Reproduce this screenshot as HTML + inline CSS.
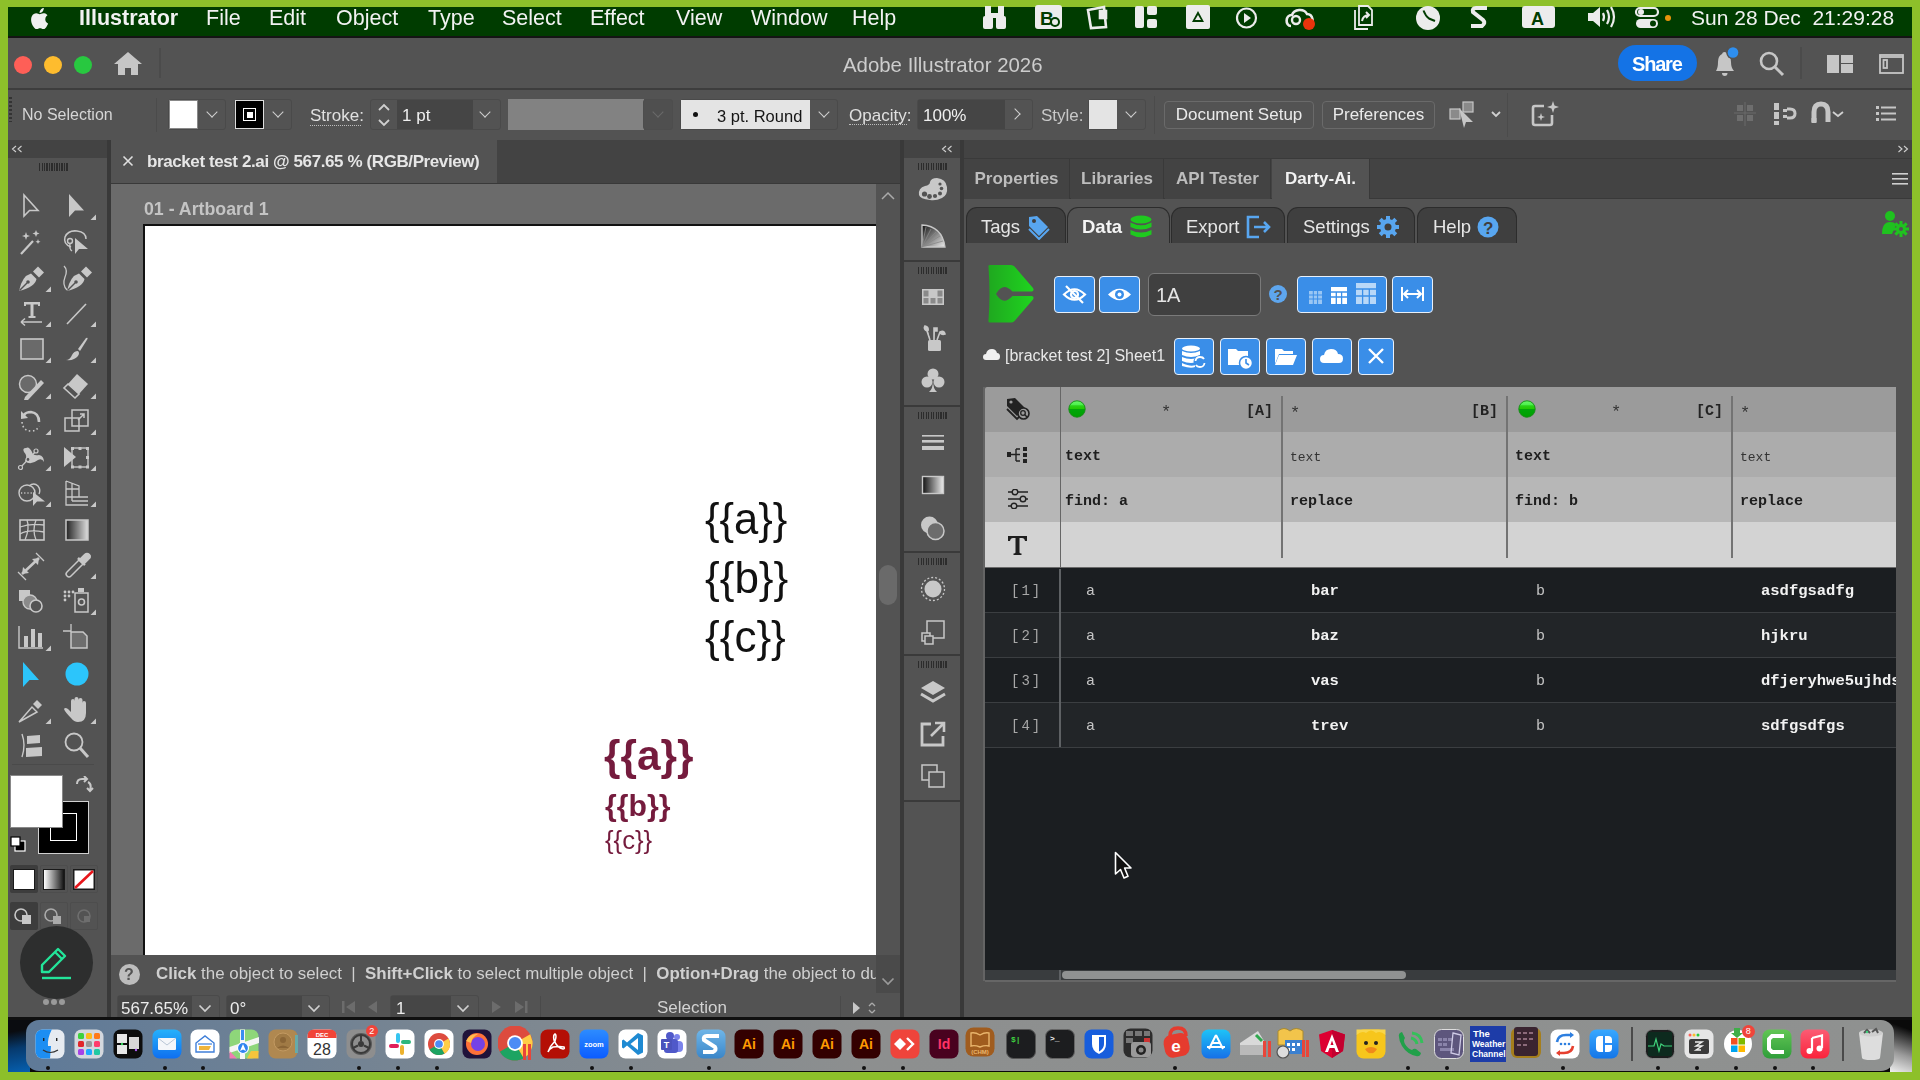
<!DOCTYPE html>
<html><head><meta charset="utf-8">
<style>
*{margin:0;padding:0;box-sizing:border-box}
html,body{width:1920px;height:1080px;overflow:hidden;background:#8dc02a;font-family:"Liberation Sans",sans-serif;-webkit-font-smoothing:antialiased}
.t{will-change:transform}
.a{position:absolute}
.t{position:absolute;white-space:nowrap;line-height:1}
#menubar{left:8px;top:7px;width:1904px;height:30px;background:#003c00}
#menubar .t{color:#f2f2f2;font-size:21.5px;top:1px}
#win{left:8px;top:37px;width:1904px;height:981px;background:#535353}
#wall{left:8px;top:1018px;width:1904px;height:54px;background:#0a0a0a}
#wallL{left:8px;top:1018px;width:22px;height:54px;background:linear-gradient(170deg,#0a0c10 0%,#0a0c10 25%,#063a6e 55%,#0660b0 100%)}
#wallR{left:1890px;top:1018px;width:22px;height:54px;background:linear-gradient(200deg,#0a0a0a 0%,#0a0a0a 20%,#9a9a9a 65%,#f0f0f0 100%)}
#wline{left:8px;top:1017px;width:1904px;height:3px;background:#101010}
#dock{left:26px;top:1020px;width:1868px;height:51px;border-radius:13px;background:linear-gradient(90deg,#5f7a98 0%,#7c8791 25%,#8d8f8f 45%,#8f9190 100%)}
.ico{position:absolute;top:1029px;width:30px;height:30px;border-radius:7px}
.dot{position:absolute;top:1066px;width:4px;height:4px;border-radius:2px;background:#111}

#mbline{left:8px;top:36px;width:1904px;height:2px;background:#141414}
#title{left:8px;top:38px;width:1904px;height:52px;background:#535353;border-bottom:2px solid #3d3d3d}
#ctrl{left:8px;top:90px;width:1904px;height:50px;background:#535353}
.lt{color:#d6d6d6}
.grp{position:absolute;border:1px solid #4a4a4a;border-radius:3px;background:#535353}
.chev{position:absolute;width:8px;height:8px;border-right:1.8px solid #d0d0d0;border-bottom:1.8px solid #d0d0d0;transform:rotate(45deg)}
.btn{position:absolute;border:1.5px solid #6a6a6a;border-radius:4px;color:#eaeaea;font-size:17px;text-align:center}

#content{left:8px;top:140px;width:1904px;height:878px;background:#393939}
.topbar{position:absolute;top:0;height:18px;background:#434343}
.grip{position:absolute;height:8px;background:repeating-linear-gradient(90deg,#2c2c2c 0 1.4px,transparent 1.4px 2.5px)}

.pg{position:absolute;left:896px;width:56px;background:#535353;border-bottom:2px solid #3a3a3a}
.pi{position:absolute;left:912px}
.ptab{position:absolute;top:19px;height:40px;background:#434343;border-right:1px solid #393939;color:#bdbdbd;font-size:17px;font-weight:bold}
.ptab span{position:absolute;top:9.5px;left:0;width:100%;text-align:center}
.dtab{position:absolute;top:67px;height:36px;background:#3f3f3f;border:1.5px solid #2c2c2c;border-bottom:none;border-radius:11px 11px 0 0;color:#e6e6e6;font-size:18.5px}
.bb{position:absolute;background:#3a8ee8;border:1.5px solid #e8f0fa;border-radius:4px}

.mono{font-family:"Liberation Mono",monospace}
.hrow{position:absolute;left:977px;width:911px;height:45px}
.brow{position:absolute;left:977px;width:911px;height:45px;border-bottom:1px solid #3b3e41}
.cs{position:absolute;width:1.5px;background:#737373}
</style></head><body>
<div id="menubar" class="a">
<svg class="a" style="left:20px;top:-1px" width="25" height="25" viewBox="0 0 22 22"><path fill="#f0f0f0" d="M15.2 11.6c0-2.3 1.9-3.4 2-3.5-1.1-1.6-2.8-1.8-3.4-1.8-1.4-.1-2.8.9-3.5.9-.7 0-1.8-.8-3-.8-1.5 0-3 .9-3.8 2.3-1.6 2.8-.4 7 1.2 9.3.8 1.1 1.7 2.4 2.9 2.3 1.2 0 1.6-.7 3-.7s1.8.7 3 .7c1.3 0 2.1-1.1 2.8-2.3.9-1.3 1.3-2.6 1.3-2.6s-2.5-1-2.5-3.8zM12.9 4.8c.6-.8 1.1-1.9 1-3-.9 0-2.1.6-2.7 1.4-.6.7-1.1 1.8-1 2.9 1 .1 2.1-.5 2.7-1.3z"/></svg>
<svg class="a" style="left:0;top:-7px" width="1904" height="37" viewBox="0 0 1904 37" fill="#ececec">
<!-- binoculars -->
<g transform="translate(975,0)"><rect x="0" y="16" width="10" height="13" rx="2"/><rect x="13" y="16" width="10" height="13" rx="2"/><rect x="2" y="6" width="6" height="11"/><rect x="15" y="6" width="6" height="11"/><rect x="8" y="13" width="7" height="5"/></g>
<!-- B box -->
<g transform="translate(1027,0)"><rect x="0" y="5" width="27" height="24" rx="3"/><text x="5" y="25" font-family="Liberation Sans" font-weight="bold" font-size="19" fill="#003c00">B</text><circle cx="20" cy="22" r="5" fill="#003c00"/><circle cx="20" cy="22" r="3" fill="#ececec"/></g>
<!-- wallet -->
<g transform="translate(1078,0)" fill="none" stroke="#ececec" stroke-width="2.6"><path d="M2 10 L18 7 L20 27 L5 28 Z"/><rect x="14" y="11" width="6" height="7" fill="#ececec"/></g>
<!-- grid -->
<g transform="translate(1127,0)"><rect x="0" y="6" width="9" height="22" rx="2"/><rect x="12" y="6" width="10" height="9" rx="2"/><rect x="12" y="19" width="10" height="9" rx="2"/></g>
<!-- drive -->
<g transform="translate(1178,0)"><rect x="0" y="5" width="24" height="24" rx="2"/><path d="M12 11 L18 22 L6 22 Z" fill="#003c00"/><path d="M12 15 L15 20 L9 20 Z" fill="#ececec"/></g>
<!-- play -->
<g transform="translate(1228,0)"><circle cx="10.5" cy="18" r="9.5" fill="none" stroke="#ececec" stroke-width="2.2"/><path d="M8 13 L15 18 L8 23 Z"/></g>
<!-- CC -->
<g transform="translate(1277,0)"><path d="M6 26 C0 26 0 15 7 15 C9 9 19 8 22 14 C28 14 30 24 24 26" fill="none" stroke="#ececec" stroke-width="2.6"/><circle cx="11" cy="20" r="4" fill="none" stroke="#ececec" stroke-width="2.4"/><circle cx="24" cy="24" r="6" fill="#e8340c"/></g>
<!-- share doc -->
<g transform="translate(1343,0)" fill="none" stroke="#ececec" stroke-width="1.8"><path d="M4 10 V29 H17"/><path d="M8 6 H17 L21 10 V25 H8 Z"/><path d="M11 21 C12 16 15 15 18 15 M15 12 L18 15 L15 18" stroke-width="2"/></g>
<!-- clock -->
<g transform="translate(1408,0)"><circle cx="12" cy="18" r="12"/><path d="M7.5 10.5 Q9.5 16 13 18.5 L19 21" fill="none" stroke="#003c00" stroke-width="2"/></g>
<!-- S -->
<g transform="translate(1460,0)" fill="none" stroke="#ececec" stroke-width="4"><path d="M19 8 H8 Q4 8 5 12 L15 20 Q18 23 14 26 H3"/></g>
<!-- A box -->
<g transform="translate(1514,0)"><rect x="0" y="6" width="33" height="22" rx="3"/><text x="9" y="25" font-family="Liberation Sans" font-weight="bold" font-size="18" fill="#003c00">A</text></g>
<!-- volume -->
<g transform="translate(1578,0)"><path d="M2 13 H7 L14 7 V27 L7 21 H2 Z"/><g fill="none" stroke="#ececec" stroke-width="2.2"><path d="M17 13 Q19 17 17 21"/><path d="M21 10 Q25 17 21 24"/><path d="M25 7 Q31 17 25 27"/></g></g>
<!-- control center -->
<g transform="translate(1628,0)"><rect x="0" y="8" width="22" height="8" rx="4" fill="none" stroke="#ececec" stroke-width="2.2"/><circle cx="5" cy="12" r="3"/><rect x="0" y="19" width="22" height="9" rx="4.5"/><circle cx="17" cy="23.5" r="3" fill="#003c00"/><circle cx="32" cy="18" r="3" fill="#e8940c"/></g>
</svg>
<div class="t" style="left:70.5px;font-weight:bold">Illustrator</div>
<div class="t" style="left:198px">File</div>
<div class="t" style="left:260.5px">Edit</div>
<div class="t" style="left:328px">Object</div>
<div class="t" style="left:419.5px">Type</div>
<div class="t" style="left:494px">Select</div>
<div class="t" style="left:581.5px">Effect</div>
<div class="t" style="left:668px">View</div>
<div class="t" style="left:743px">Window</div>
<div class="t" style="left:843.5px">Help</div>
<div class="t" style="left:1683px;font-size:21px;top:-0.5px">Sun 28 Dec&nbsp; 21:29:28</div>
</div>
<div id="win" class="a"></div>
<div id="mbline" class="a"></div>
<div id="title" class="a">
<div class="a" style="left:5.5px;top:17.5px;width:18px;height:18px;border-radius:9px;background:#fe5f57"></div>
<div class="a" style="left:35.5px;top:17.5px;width:18px;height:18px;border-radius:9px;background:#febc2e"></div>
<div class="a" style="left:65.5px;top:17.5px;width:18px;height:18px;border-radius:9px;background:#28c840"></div>
<svg class="a" style="left:106px;top:14px" width="28" height="24" viewBox="0 0 28 24"><path fill="#c6c6c6" d="M14 0 L28 12 L24 12 L24 23 L17 23 L17 16 L11 16 L11 23 L4 23 L4 12 L0 12 Z"/></svg>
<div class="a" style="left:151px;top:10px;width:2px;height:30px;background:#4b4b4b"></div>
<div class="t" style="left:834.5px;top:16.5px;font-size:20.4px;color:#cdcdcd">Adobe Illustrator 2026</div>
<div class="a" style="left:1610px;top:7px;width:79px;height:36px;border-radius:18px;background:#1473e6"></div>
<div class="t" style="left:1624px;top:16px;font-size:20px;font-weight:bold;color:#fff;letter-spacing:-1.2px">Share</div>
<svg class="a" style="left:1692px;top:8px" width="40" height="32" viewBox="0 0 40 32"><path fill="#c6c6c6" d="M16 25 Q18 22 18 16 Q18 10 22 8 Q22.5 6 24.5 6 Q26.5 6 27 8 Q31 10 31 16 Q31 22 34 25 Z"/><path fill="#c6c6c6" d="M22 27 H27.5 Q27.5 30 24.75 30 Q22 30 22 27Z"/><circle cx="33" cy="6.5" r="6.8" fill="#535353"/><circle cx="33" cy="6.5" r="5.3" fill="#2e8ff0"/></svg>
<svg class="a" style="left:1750px;top:12px" width="28" height="28" viewBox="0 0 28 28"><circle cx="11" cy="11" r="8" fill="none" stroke="#c6c6c6" stroke-width="2.6"/><path d="M17 17 L25 25" stroke="#c6c6c6" stroke-width="3"/></svg>
<div class="a" style="left:1792px;top:9px;width:2px;height:32px;background:#4b4b4b"></div>
<svg class="a" style="left:1819px;top:15px" width="30" height="22" viewBox="0 0 30 22" fill="#c6c6c6"><rect x="0" y="2" width="12" height="18"/><rect x="14" y="2" width="12" height="8"/><rect x="14" y="11" width="12" height="9"/></svg>
<svg class="a" style="left:1871px;top:15px" width="26" height="22" viewBox="0 0 26 22" fill="none" stroke="#c6c6c6" stroke-width="1.8"><rect x="1" y="2" width="23" height="18"/><path d="M1 4 H24"/><rect x="4.5" y="7" width="3.5" height="8"/></svg>
</div>
<div id="ctrl" class="a">
<div class="a" style="left:1px;top:7px;width:3px;height:25px;background:repeating-linear-gradient(180deg,#333 0 2px,transparent 2px 4px)"></div>
<div class="t lt" style="left:14px;top:17px;font-size:16px">No Selection</div>
<div class="a" style="left:148px;top:8px;width:1px;height:34px;background:#4b4b4b"></div>
<div class="grp" style="left:160px;top:9px;width:58px;height:31px"></div>
<div class="a" style="left:161px;top:10px;width:29px;height:29px;background:#fff;border:1px solid #888"></div>
<div class="chev" style="left:200px;top:18px"></div>
<div class="grp" style="left:226px;top:9px;width:58px;height:31px"></div>
<div class="a" style="left:227px;top:10px;width:29px;height:29px;background:#000;border:1px solid #ddd"></div>
<div class="a" style="left:235px;top:18px;width:13px;height:13px;border:1.5px solid #fff"></div>
<div class="a" style="left:238.5px;top:21.5px;width:6px;height:6px;background:#fff"></div>
<div class="chev" style="left:266px;top:18px"></div>
<div class="t lt" style="left:302px;top:17px;font-size:17px;color:#e0e0e0">Stroke:</div>
<div class="a" style="left:302px;top:35px;width:51px;height:0;border-top:1.5px dotted #bdbdbd"></div>
<div class="grp" style="left:362px;top:9px;width:131px;height:31px"></div>
<div class="a" style="left:389px;top:10px;width:76px;height:29px;background:#454545"></div>
<svg class="a" style="left:367px;top:11px" width="18" height="28" viewBox="0 0 18 28" fill="none" stroke="#d0d0d0" stroke-width="1.8"><path d="M4 9 L9 4 L14 9"/><path d="M4 19 L9 24 L14 19"/></svg>
<div class="t" style="left:394px;top:17px;font-size:17px;color:#f0f0f0">1 pt</div>
<div class="chev" style="left:473px;top:18px"></div>
<div class="a" style="left:500px;top:9px;width:136px;height:31px;background:#828282"></div>
<div class="grp" style="left:635px;top:9px;width:30px;height:31px;background:#4f4f4f;border-color:#4d4d4d"></div>
<div class="chev" style="left:646px;top:18px;border-color:#6a6a6a"></div>
<div class="grp" style="left:672px;top:9px;width:158px;height:31px"></div>
<div class="a" style="left:673px;top:10px;width:129px;height:29px;background:#e4e4e4"></div>
<div class="a" style="left:685px;top:22px;width:5px;height:5px;border-radius:3px;background:#111"></div>
<div class="t" style="left:709px;top:17.5px;font-size:16.5px;color:#141414">3 pt. Round</div>
<div class="chev" style="left:812px;top:18px"></div>
<div class="t lt" style="left:841px;top:17px;font-size:17px;color:#e0e0e0">Opacity:</div>
<div class="a" style="left:841px;top:34px;width:58px;height:0;border-top:1.5px dotted #bdbdbd"></div>
<div class="grp" style="left:909px;top:9px;width:116px;height:31px"></div>
<div class="a" style="left:910px;top:10px;width:87px;height:29px;background:#454545"></div>
<div class="t" style="left:915px;top:17px;font-size:17px;color:#f0f0f0">100%</div>
<div class="a" style="left:1003px;top:20px;width:8px;height:8px;border-right:1.8px solid #d0d0d0;border-top:1.8px solid #d0d0d0;transform:rotate(45deg)"></div>
<div class="t" style="left:1033px;top:17px;font-size:17px;color:#c8c8c8">Style:</div>
<div class="grp" style="left:1080px;top:9px;width:58px;height:31px"></div>
<div class="a" style="left:1081px;top:10px;width:28px;height:29px;background:#e4e4e4"></div>
<div class="chev" style="left:1119px;top:18px"></div>
<div class="a" style="left:1146px;top:6px;width:1px;height:38px;background:#4b4b4b"></div>
<div class="btn" style="left:1156px;top:11px;width:150px;height:28px;line-height:25px">Document Setup</div>
<div class="btn" style="left:1314px;top:11px;width:113px;height:28px;line-height:25px">Preferences</div>
<svg class="a" style="left:1440px;top:10px" width="60" height="30" viewBox="0 0 60 30"><g fill="#8a8a8a" stroke="#c6c6c6" stroke-width="1.2"><rect x="2" y="9" width="10" height="10"/><rect x="15" y="2" width="10" height="10"/></g><path d="M11 8 L25 22 L18 22 L16 28 Z" fill="#c6c6c6"/><path d="M44 12 L48 16 L52 12" fill="none" stroke="#d0d0d0" stroke-width="1.8"/></svg>
<div class="a" style="left:1499px;top:3px;width:1px;height:44px;background:#4b4b4b"></div>
<svg class="a" style="left:1522px;top:10px" width="30" height="28" viewBox="0 0 30 28"><path d="M14 6 H5 Q3 6 3 8 V23 Q3 25 5 25 H20 Q22 25 22 23 V15" fill="none" stroke="#c6c6c6" stroke-width="2.6"/><path d="M23 1 L24.5 5.5 L29 7 L24.5 8.5 L23 13 L21.5 8.5 L17 7 L21.5 5.5Z M11 13 L12 16 L15 17 L12 18 L11 21 L10 18 L7 17 L10 16Z" fill="#c6c6c6"/></svg>
<svg class="a" style="left:1726px;top:11px" width="24" height="26" viewBox="0 0 24 26"><g fill="#6e6e6e"><rect x="3" y="4" width="6" height="6"/><rect x="13" y="4" width="6" height="6"/><rect x="3" y="14" width="6" height="6"/><rect x="13" y="14" width="6" height="6"/></g><path d="M11 1 V25 M0 12 H22" stroke="#6a6a6a" stroke-width="1"/></svg>
<svg class="a" style="left:1766px;top:11px" width="24" height="26" viewBox="0 0 24 26" fill="#c6c6c6"><rect x="0" y="2" width="5" height="7"/><rect x="0" y="11" width="5" height="7"/><rect x="0" y="20" width="5" height="4"/><rect x="9" y="8" width="4" height="3"/><rect x="9" y="14" width="4" height="3"/><path d="M13 8 H16 Q21 8 21 12.5 Q21 17 16 17 H13" fill="none" stroke="#c6c6c6" stroke-width="3"/></svg>
<svg class="a" style="left:1803px;top:11px" width="42" height="26" viewBox="0 0 42 26"><path d="M3 21 V11 Q3 3 10 3 Q17 3 17 11 V21" fill="none" stroke="#c6c6c6" stroke-width="5"/><rect x="0.5" y="17" width="5" height="5" fill="#c6c6c6"/><path d="M22 11 L27 15 L32 11" fill="none" stroke="#d0d0d0" stroke-width="1.8"/></svg>
<svg class="a" style="left:1868px;top:15px" width="20" height="18" viewBox="0 0 20 18" fill="#c6c6c6"><rect x="0" y="1" width="3" height="3"/><rect x="0" y="7" width="3" height="3"/><rect x="0" y="13" width="3" height="3"/><rect x="5" y="1.5" width="15" height="2"/><rect x="5" y="7.5" width="15" height="2"/><rect x="5" y="13.5" width="15" height="2"/></svg>
</div>
<div id="content" class="a">
<!-- toolbar -->
<div class="a" style="left:0;top:0;width:99px;height:877px;background:#535353"></div>
<div class="topbar" style="left:0;width:99px"></div>
<svg class="a" style="left:2px;top:4px" width="14" height="10" viewBox="0 0 14 10" fill="none" stroke="#cfcfcf" stroke-width="1.1"><path d="M6 2 L2.5 5 L6 8 M11.5 2 L8 5 L11.5 8"/></svg>
<div class="grip" style="left:31px;top:23px;width:30px"></div>
<!-- tool icons -->
<svg class="a" style="left:8px;top:51px" width="38" height="38" viewBox="0 0 38 38"><path d="M8 4 V25 L13.5 19.5 L22 19.5Z" fill="none" stroke="#c8c8c8" stroke-width="1.6"/></svg>
<svg class="a" style="left:53px;top:51px" width="38" height="38" viewBox="0 0 38 38"><path d="M8 3 V26 L14 19.5 L23 19.5Z" fill="#c8c8c8"/><path d="M29.5 29 L35 23.5 V29Z" fill="#c8c8c8"/></svg>
<svg class="a" style="left:8px;top:87px" width="38" height="38" viewBox="0 0 38 38"><path d="M5 27 L17 14" stroke="#c8c8c8" stroke-width="2.2"/><path d="M10 5 L11 8 L14 9 L11 10 L10 13 L9 10 L6 9 L9 8Z M20 3 L21 5.5 L23.5 6.5 L21 7.5 L20 10 L19 7.5 L16.5 6.5 L19 5.5Z M22 12 L22.7 14 L24.5 14.7 L22.7 15.4 L22 17 L21.3 15.4 L19.5 14.7 L21.3 14Z" fill="#c8c8c8"/></svg>
<svg class="a" style="left:53px;top:87px" width="38" height="38" viewBox="0 0 38 38"><path d="M10 20 Q2 17 4 10 Q7 3 16 4 Q25 5 25 12" fill="none" stroke="#c8c8c8" stroke-width="1.5"/><circle cx="9" cy="14" r="2.5" fill="none" stroke="#c8c8c8" stroke-width="1.4"/><path d="M9 17 Q8 22 11 24" fill="none" stroke="#c8c8c8" stroke-width="1.4"/><path d="M14 11 V27 L18 22 L27 22Z" fill="#c8c8c8"/></svg>
<svg class="a" style="left:8px;top:123px" width="38" height="38" viewBox="0 0 38 38"><path d="M15 10.5 L20.5 16 Q19 24 3 28 Q6 13 15 10.5Z" fill="#c8c8c8"/><path d="M17 8.5 L22 3.5 L28 9.5 L23 14.5Z" fill="#c8c8c8"/><path d="M3.5 27.5 L11 20" stroke="#535353" stroke-width="1.4"/><circle cx="12" cy="19" r="1.8" fill="#535353"/><path d="M29.5 29 L35 23.5 V29Z" fill="#c8c8c8"/></svg>
<svg class="a" style="left:53px;top:123px" width="38" height="38" viewBox="0 0 38 38"><g transform="translate(3,0)"><path d="M15 10.5 L20.5 16 Q19 24 3 28 Q6 13 15 10.5Z" fill="#c8c8c8"/><path d="M17 8.5 L22 3.5 L28 9.5 L23 14.5Z" fill="#c8c8c8"/><path d="M3.5 27.5 L11 20" stroke="#535353" stroke-width="1.4"/><circle cx="12" cy="19" r="1.8" fill="#535353"/></g><path d="M6 27 Q1 22 4 14 Q7 7 3 3" fill="none" stroke="#c8c8c8" stroke-width="1.3"/></svg>
<svg class="a" style="left:8px;top:158px" width="38" height="38" viewBox="0 0 38 38"><path d="M8 4 H24 V8 H22 V6.5 H17.5 V18 H19.5 V20 H12.5 V18 H14.5 V6.5 H10 V8 H8Z" fill="#c8c8c8"/><path d="M5 24 H26 M5 24 L9 20.5 M5 24 L9 27.5" fill="none" stroke="#c8c8c8" stroke-width="1.5"/><path d="M29.5 29 L35 23.5 V29Z" fill="#c8c8c8"/></svg>
<svg class="a" style="left:53px;top:158px" width="38" height="38" viewBox="0 0 38 38"><path d="M6 26 L25 6" stroke="#c8c8c8" stroke-width="1.6"/><path d="M29.5 29 L35 23.5 V29Z" fill="#c8c8c8"/></svg>
<svg class="a" style="left:8px;top:194px" width="38" height="38" viewBox="0 0 38 38"><rect x="5" y="5" width="22" height="20" fill="#6a6a6a" stroke="#c8c8c8" stroke-width="1.6"/><path d="M29.5 29 L35 23.5 V29Z" fill="#c8c8c8"/></svg>
<svg class="a" style="left:53px;top:194px" width="38" height="38" viewBox="0 0 38 38"><path d="M17 15 L25 4 Q27 3 26.5 5 L19 17Z" fill="#c8c8c8"/><path d="M5 26 Q9 26 11 21 Q13 17 17 17 Q19 19 17 22 Q13 27 5 26Z" fill="#c8c8c8"/><path d="M29.5 29 L35 23.5 V29Z" fill="#c8c8c8"/></svg>
<svg class="a" style="left:8px;top:230px" width="38" height="38" viewBox="0 0 38 38"><circle cx="12" cy="14" r="8.5" fill="#6a6a6a" stroke="#c8c8c8" stroke-width="1.5"/><path d="M9 27 L25 10 L28 13 L12 30 L8 30Z" fill="#c8c8c8"/><path d="M29.5 29 L35 23.5 V29Z" fill="#c8c8c8"/></svg>
<svg class="a" style="left:53px;top:230px" width="38" height="38" viewBox="0 0 38 38"><path d="M16 4 L27 14 L18 24 L7 14Z" fill="#c8c8c8"/><path d="M7 14 L18 24 L14 28 L3 18Z" fill="none" stroke="#c8c8c8" stroke-width="1.6"/><path d="M29.5 29 L35 23.5 V29Z" fill="#c8c8c8"/></svg>
<svg class="a" style="left:8px;top:266px" width="38" height="38" viewBox="0 0 38 38"><path d="M23 16 Q23 7 15 6 Q10 6 8 9" fill="none" stroke="#c8c8c8" stroke-width="2.6"/><path d="M5 5 L5 13 L12 12Z" fill="#c8c8c8"/><path d="M6 16 Q7 25 15 25 Q21 25 23 20" fill="none" stroke="#c8c8c8" stroke-width="1.6" stroke-dasharray="1.5 2.5"/><path d="M29.5 29 L35 23.5 V29Z" fill="#c8c8c8"/></svg>
<svg class="a" style="left:53px;top:266px" width="38" height="38" viewBox="0 0 38 38"><rect x="11" y="4" width="16" height="16" fill="none" stroke="#c8c8c8" stroke-width="1.5"/><rect x="4" y="12" width="14" height="13" fill="none" stroke="#c8c8c8" stroke-width="1.5"/><path d="M17 14 L23 8 M19 8 H23 V12" fill="none" stroke="#c8c8c8" stroke-width="1.5"/><path d="M29.5 29 L35 23.5 V29Z" fill="#c8c8c8"/></svg>
<svg class="a" style="left:8px;top:302px" width="38" height="38" viewBox="0 0 38 38"><path d="M10 6 Q6 6 8 10 Q12 14 9 19 Q14 24 22 18 Q26 16 28 20 Q28 14 23 13 Q17 14 16 10 Q13 4 10 6Z" fill="#c8c8c8"/><path d="M4 26 L20 9" stroke="#c8c8c8" stroke-width="1.3"/><circle cx="4.5" cy="25.5" r="2" fill="#535353" stroke="#c8c8c8" stroke-width="1.2"/><circle cx="20" cy="9" r="2" fill="#535353" stroke="#c8c8c8" stroke-width="1.2"/><circle cx="12" cy="17.5" r="2" fill="#535353" stroke="#c8c8c8" stroke-width="1.2"/><path d="M29.5 29 L35 23.5 V29Z" fill="#c8c8c8"/></svg>
<svg class="a" style="left:53px;top:302px" width="38" height="38" viewBox="0 0 38 38"><path d="M3 5 V25 L15 15Z" fill="#c8c8c8"/><rect x="11" y="6" width="16" height="19" fill="none" stroke="#c8c8c8" stroke-width="1.4"/><g fill="#c8c8c8"><rect x="10" y="5" width="3" height="3"/><rect x="17.5" y="5" width="3" height="3"/><rect x="25" y="5" width="3" height="3"/><rect x="10" y="23.5" width="3" height="3"/><rect x="17.5" y="23.5" width="3" height="3"/><rect x="25" y="23.5" width="3" height="3"/><rect x="25" y="14" width="3" height="3"/></g><path d="M29.5 29 L35 23.5 V29Z" fill="#c8c8c8"/></svg>
<svg class="a" style="left:8px;top:338px" width="38" height="38" viewBox="0 0 38 38"><circle cx="11" cy="15" r="8" fill="none" stroke="#c8c8c8" stroke-width="1.4"/><path d="M13 8 Q18 4 22 8 Q25 12 23 16" fill="none" stroke="#c8c8c8" stroke-width="1.4"/><path d="M5 15 H20" stroke="#c8c8c8" stroke-width="1.3" stroke-dasharray="1.2 2"/><path d="M17 14 V28 L21 23.5 L29 23.5Z" fill="#c8c8c8"/><path d="M29.5 29 L35 23.5 V29Z" fill="#c8c8c8"/></svg>
<svg class="a" style="left:53px;top:338px" width="38" height="38" viewBox="0 0 38 38"><path d="M5 3 V27 H27 M5 3 L18 8 V19 M5 11 H18 M11 5 V23 M5 19 H18 M18 19 L27 19 M18 23 H27 M11 23 H27" fill="none" stroke="#c8c8c8" stroke-width="1.3"/><path d="M29.5 29 L35 23.5 V29Z" fill="#c8c8c8"/></svg>
<svg class="a" style="left:8px;top:374px" width="38" height="38" viewBox="0 0 38 38"><rect x="4" y="6" width="24" height="20" fill="none" stroke="#c8c8c8" stroke-width="1.6"/><path d="M4 13 Q14 9 28 11 M4 20 Q12 15 28 18 M11 6 Q14 14 9 26 M20 6 Q16 16 20 26" fill="none" stroke="#c8c8c8" stroke-width="1.3"/></svg>
<svg class="a" style="left:53px;top:374px" width="38" height="38" viewBox="0 0 38 38"><defs><linearGradient id="tgr"><stop offset="0" stop-color="#222"/><stop offset="1" stop-color="#ddd"/></linearGradient></defs><rect x="5" y="6" width="22" height="20" fill="url(#tgr)" stroke="#c8c8c8" stroke-width="1.5"/></svg>
<svg class="a" style="left:8px;top:410px" width="38" height="38" viewBox="0 0 38 38"><path d="M6 24 L23 8" stroke="#c8c8c8" stroke-width="2.5"/><path d="M23 8 L16 9 L22 15Z M6 24 L13 23 L7 17Z" fill="#c8c8c8"/><path d="M2 22 L10 30 M20 3 L28 11" stroke="#c8c8c8" stroke-width="1.3"/></svg>
<svg class="a" style="left:53px;top:410px" width="38" height="38" viewBox="0 0 38 38"><path d="M6 26 Q4 24 6 22 L18 10 L22 14 L10 26 Q8 28 6 26Z" fill="none" stroke="#c8c8c8" stroke-width="1.5"/><path d="M17 8 L24 15 M19 10 L24 5 Q26 3 28 5 Q30 7 27 9 L22 14" fill="#c8c8c8" stroke="#c8c8c8" stroke-width="2.5"/><path d="M29.5 29 L35 23.5 V29Z" fill="#c8c8c8"/></svg>
<svg class="a" style="left:8px;top:446px" width="38" height="38" viewBox="0 0 38 38"><rect x="3" y="4" width="11" height="11" fill="#c8c8c8"/><circle cx="14" cy="16" r="7" fill="#8a8a8a" stroke="#c8c8c8" stroke-width="1.4"/><circle cx="20" cy="20" r="6" fill="#535353" stroke="#c8c8c8" stroke-width="1.6"/></svg>
<svg class="a" style="left:53px;top:446px" width="38" height="38" viewBox="0 0 38 38"><g fill="#c8c8c8"><circle cx="4" cy="6" r="1.4"/><circle cx="8" cy="6" r="1.4"/><circle cx="12" cy="6" r="1.4"/><circle cx="4" cy="10" r="1.4"/><circle cx="8" cy="10" r="1.4"/><circle cx="4" cy="14" r="1.4"/><rect x="17" y="2" width="6" height="4"/></g><rect x="14" y="7" width="13" height="19" fill="none" stroke="#c8c8c8" stroke-width="1.5"/><circle cx="20.5" cy="16" r="3" fill="none" stroke="#c8c8c8" stroke-width="1.6"/><path d="M29.5 29 L35 23.5 V29Z" fill="#c8c8c8"/></svg>
<svg class="a" style="left:8px;top:482px" width="38" height="38" viewBox="0 0 38 38"><path d="M3 4 V26 H27" fill="none" stroke="#c8c8c8" stroke-width="1.4"/><g fill="#c8c8c8"><rect x="8" y="14" width="4" height="11"/><rect x="15" y="7" width="4" height="18"/><rect x="22" y="11" width="4" height="14"/></g><path d="M29.5 29 L35 23.5 V29Z" fill="#c8c8c8"/></svg>
<svg class="a" style="left:53px;top:482px" width="38" height="38" viewBox="0 0 38 38"><path d="M10 2 V10 M2 9 H10" stroke="#c8c8c8" stroke-width="1.3"/><path d="M10 10 H22 L26 14 V26 H10Z" fill="#6e6e6e" stroke="#c8c8c8" stroke-width="1.5"/></svg>
<svg class="a" style="left:8px;top:519px" width="38" height="38" viewBox="0 0 38 38"><path d="M7 3 V28 L13.5 21 L23 21Z" fill="#2cc5fb"/></svg>
<svg class="a" style="left:53px;top:519px" width="38" height="38" viewBox="0 0 38 38"><circle cx="16" cy="15" r="11.5" fill="#2cc5fb"/></svg>
<svg class="a" style="left:8px;top:555px" width="38" height="38" viewBox="0 0 38 38"><path d="M3 27 L16 12 L21 17Z" fill="none" stroke="#c8c8c8" stroke-width="1.5"/><path d="M17 9 L21 5 L26 10 L22 14Z" fill="#c8c8c8"/><path d="M29.5 29 L35 23.5 V29Z" fill="#c8c8c8"/></svg>
<svg class="a" style="left:53px;top:555px" width="38" height="38" viewBox="0 0 38 38"><path d="M10 23 Q4 17 3 14 Q4 12 7 14 L10 17 V6 Q10 4 12 4 Q13.5 4 13.5 6 V13 V4 Q13.5 2 15.5 2 Q17.5 2 17.5 4 V13 V5 Q17.5 3 19.5 3 Q21.5 3 21.5 5 V13 V8 Q21.5 6 23 6 Q25 6 25 8 V18 Q25 27 17 27 Q13 27 10 23Z" fill="#c8c8c8"/><path d="M29.5 29 L35 23.5 V29Z" fill="#c8c8c8"/></svg>
<svg class="a" style="left:8px;top:590px" width="38" height="38" viewBox="0 0 38 38"><path d="M6 4 Q10 15 6 27" fill="none" stroke="#c8c8c8" stroke-width="1.4"/><path d="M11 6 L24 5 L24 13 L11 14Z M10 18 L26 17 L26 26 L10 27Z" fill="#c8c8c8"/></svg>
<svg class="a" style="left:53px;top:590px" width="38" height="38" viewBox="0 0 38 38"><circle cx="13" cy="12" r="8.5" fill="none" stroke="#c8c8c8" stroke-width="1.8"/><path d="M19 18 L27 27" stroke="#c8c8c8" stroke-width="3"/></svg>
<div class="a" style="left:4px;top:624px;width:82px;height:1px;background:#4a4a4a"></div>
<div class="a" style="left:30px;top:661px;width:51px;height:53px;background:#000;border:1.5px solid #d0d0d0"></div>
<div class="a" style="left:42px;top:673px;width:27px;height:28px;background:#000;border:1.5px solid #fff"></div>
<div class="a" style="left:2px;top:635px;width:53px;height:53px;background:#fff;border:1px solid #888"></div>
<svg class="a" style="left:66px;top:636px" width="20" height="20" viewBox="0 0 20 20" fill="none" stroke="#c8c8c8" stroke-width="2"><path d="M3 8 Q3 3 8 3 H12 M10 0 L13 3 L10 6 M14 6 Q18 8 16 14 M13 12 L16 15 L19 12"/></svg>
<svg class="a" style="left:1px;top:695px" width="18" height="18" viewBox="0 0 18 18"><rect x="6" y="6" width="10" height="10" fill="#000" stroke="#fff" stroke-width="1.2"/><rect x="2" y="2" width="9" height="9" fill="#fff" stroke="#000" stroke-width="1.2"/></svg>
<div class="a" style="left:2px;top:725px;width:28px;height:28px;background:#3d3d3d;border-radius:2px"></div>
<div class="a" style="left:5px;top:729px;width:22px;height:21px;background:#fff;border:1.5px solid #1a1a1a"></div>
<div class="a" style="left:32px;top:725px;width:28px;height:28px;border:1px solid #4d4d4d;border-radius:2px"></div>
<div class="a" style="left:35px;top:729px;width:22px;height:21px;background:linear-gradient(90deg,#fff,#111);border:1.5px solid #1a1a1a"></div>
<div class="a" style="left:62px;top:725px;width:28px;height:28px;border:1px solid #4d4d4d;border-radius:2px"></div>
<svg class="a" style="left:65px;top:729px" width="22" height="21" viewBox="0 0 22 21"><rect x="0.75" y="0.75" width="20.5" height="19.5" fill="#fff" stroke="#1a1a1a" stroke-width="1.5"/><path d="M2 19 L20 2" stroke="#e8161b" stroke-width="2.6"/></svg>
<div class="a" style="left:2px;top:762px;width:28px;height:28px;background:#3d3d3d;border-radius:2px"></div>
<div class="a" style="left:32px;top:762px;width:28px;height:28px;border:1px solid #4d4d4d;border-radius:2px"></div>
<div class="a" style="left:62px;top:762px;width:28px;height:28px;border:1px solid #4d4d4d;border-radius:2px"></div>
<svg class="a" style="left:5px;top:766px" width="22" height="20" viewBox="0 0 22 20"><circle cx="8" cy="9" r="6" fill="none" stroke="#c8c8c8" stroke-width="1.6"/><rect x="9" y="9" width="9" height="9" fill="#c8c8c8"/></svg>
<svg class="a" style="left:35px;top:766px" width="22" height="20" viewBox="0 0 22 20"><circle cx="8" cy="9" r="6" fill="none" stroke="#aaa" stroke-width="1.6"/><rect x="10" y="10" width="8" height="8" fill="#aaa"/></svg>
<svg class="a" style="left:65px;top:766px" width="22" height="20" viewBox="0 0 22 20"><circle cx="11" cy="10" r="6" fill="none" stroke="#6e6e6e" stroke-width="1.6"/><path d="M11 10 H17 V16 H11Z" fill="#6e6e6e"/></svg>
<div class="a" style="left:12px;top:786px;width:73px;height:73px;border-radius:37px;background:#2d2e2e"></div>
<svg class="a" style="left:30px;top:804px" width="38" height="38" viewBox="0 0 38 38" fill="none" stroke="#23e59a" stroke-width="2.4" stroke-linejoin="round"><path d="M4 28 V21 L20 5 L27 12 L11 28Z M17 8 L24 15"/><path d="M4 34 H33"/></svg>
<div class="a" style="left:35px;top:859px;width:6px;height:6px;border-radius:3px;background:#9a9a9a"></div>
<div class="a" style="left:43px;top:859px;width:6px;height:6px;border-radius:3px;background:#9a9a9a"></div>
<div class="a" style="left:51px;top:859px;width:6px;height:6px;border-radius:3px;background:#9a9a9a"></div>
<!-- doc area -->
<div class="a" style="left:103px;top:0;width:789px;height:43px;background:#434343"></div>
<div class="a" style="left:103px;top:0;width:386px;height:43px;background:#535353"></div>
<svg class="a" style="left:114px;top:15px" width="12" height="12" viewBox="0 0 12 12" stroke="#e0e0e0" stroke-width="1.6"><path d="M1.5 1.5 L10.5 10.5 M10.5 1.5 L1.5 10.5"/></svg>
<div class="t" style="left:139px;top:13px;font-size:17px;font-weight:bold;color:#e6e6e6;letter-spacing:-0.4px">bracket test 2.ai @ 567.65 % (RGB/Preview)</div>
<div class="a" style="left:103px;top:44px;width:765px;height:771px;background:#6b6b6b"></div>
<div class="t" style="left:135.5px;top:60.5px;font-size:17.75px;font-weight:bold;color:#c4c4c4">01 - Artboard 1</div>
<div class="a" style="left:135px;top:84px;width:733px;height:731px;background:#fff;border-left:2px solid #111;border-top:2px solid #111"></div>
<div class="a" style="left:868px;top:44px;width:24px;height:771px;background:#535353"></div><div class="a" style="left:868px;top:815px;width:24px;height:38px;background:#4a4a4a"></div>
<svg class="a" style="left:872px;top:50px" width="16" height="12" viewBox="0 0 16 12" fill="none" stroke="#aaa" stroke-width="1.5"><path d="M2 9 L8 3 L14 9"/></svg>
<div class="a" style="left:871px;top:425px;width:18px;height:40px;border-radius:9px;background:#6a6a6a"></div>

<!-- artboard text -->
<div class="t" id="ta" style="left:696.8px;top:358.4px;font-size:43.5px;color:#111">{{a}}</div>
<div class="t" id="tb" style="left:696.8px;top:416.4px;font-size:44.0px;color:#111">{{b}}</div>
<div class="t" id="tc" style="left:696.8px;top:475.4px;font-size:44.0px;color:#111">{{c}}</div>
<div class="t" id="ma" style="left:596.0px;top:594.6px;font-size:42.3px;font-weight:bold;color:#751b3d">{{a}}</div>
<div class="t" id="mb" style="left:597.0px;top:650.8px;font-size:30.2px;font-weight:bold;color:#751b3d">{{b}}</div>
<div class="t" id="mc" style="left:597.0px;top:688.3px;font-size:25.7px;color:#751b3d">{{c}}</div>
<!-- hint bar -->
<div class="a" style="left:103px;top:815px;width:765px;height:38px;background:#535353"></div>
<div class="a" style="left:111px;top:824px;width:21px;height:21px;border-radius:11px;background:#bdbdbd"></div>
<div class="t" style="left:116px;top:827px;font-size:16px;font-weight:bold;color:#535353">?</div>
<div class="t" style="left:148px;top:826px;font-size:16.9px;color:#cfcfcf;width:720px;overflow:hidden"><b>Click</b> the object to select &nbsp;|&nbsp; <b>Shift+Click</b> to select multiple object &nbsp;|&nbsp; <b>Option+Drag</b> the object to du</div>
<!-- status bar -->
<div class="a" style="left:103px;top:853px;width:789px;height:24px;background:#535353"></div>
<!-- status content -->
<div class="grp" style="left:109px;top:855px;width:103px;height:26px;background:#535353"></div>
<div class="a" style="left:110px;top:856px;width:74px;height:24px;background:#464646"></div>
<div class="t" style="left:113px;top:860px;font-size:17px;color:#ececec">567.65%</div>
<svg class="a" style="left:190px;top:864px" width="14" height="9" viewBox="0 0 14 9" fill="none" stroke="#d0d0d0" stroke-width="1.7"><path d="M1.5 1.5 L7 7 L12.5 1.5"/></svg>
<div class="grp" style="left:218px;top:855px;width:104px;height:26px;background:#535353"></div>
<div class="a" style="left:219px;top:856px;width:75px;height:24px;background:#464646"></div>
<div class="t" style="left:222px;top:860px;font-size:17px;color:#ececec">0°</div>
<svg class="a" style="left:299px;top:864px" width="14" height="9" viewBox="0 0 14 9" fill="none" stroke="#d0d0d0" stroke-width="1.7"><path d="M1.5 1.5 L7 7 L12.5 1.5"/></svg>
<svg class="a" style="left:332px;top:859px" width="200" height="16" viewBox="0 0 200 16" fill="#6c6c6c"><rect x="2" y="2" width="2.5" height="12"/><path d="M15 2 V14 L6 8Z"/><path d="M37 2 V14 L28 8Z"/><path d="M152 2 V14 L161 8Z"/><path d="M175 2 V14 L184 8Z"/><rect x="185" y="2" width="2.5" height="12"/></svg>
<div class="grp" style="left:382px;top:855px;width:89px;height:26px;background:#535353"></div>
<div class="a" style="left:383px;top:856px;width:60px;height:24px;background:#464646"></div>
<div class="t" style="left:388px;top:860px;font-size:17px;color:#ececec">1</div>
<svg class="a" style="left:448px;top:864px" width="14" height="9" viewBox="0 0 14 9" fill="none" stroke="#d0d0d0" stroke-width="1.7"><path d="M1.5 1.5 L7 7 L12.5 1.5"/></svg>
<div class="a" style="left:532px;top:856px;width:1px;height:22px;background:#4a4a4a"></div>
<div class="t" style="left:649px;top:859px;font-size:17px;color:#d2d2d2">Selection</div>
<div class="a" style="left:832px;top:856px;width:1px;height:22px;background:#4a4a4a"></div>
<svg class="a" style="left:842px;top:860px" width="30" height="16" viewBox="0 0 30 16"><path d="M3 2 V14 L10 8Z" fill="#c8c8c8"/><path d="M22 3 L25 6 M22 13 L25 10 M22 3 L19 6 M22 13 L19 10" stroke="#aaa" stroke-width="1.4" fill="none"/></svg>
<svg class="a" style="left:873px;top:837px" width="14" height="9" viewBox="0 0 14 9" fill="none" stroke="#9a9a9a" stroke-width="1.7"><path d="M1.5 1.5 L7 7 L12.5 1.5"/></svg>
<!-- icon column -->
<div class="topbar" style="left:896px;width:56px"></div>
<svg class="a" style="left:932px;top:4px" width="14" height="10" viewBox="0 0 14 10" fill="none" stroke="#cfcfcf" stroke-width="1.1"><path d="M6 2 L2.5 5 L6 8 M11.5 2 L8 5 L11.5 8"/></svg>
<div class="pg" style="top:18px;height:104px"></div>
<div class="pg" style="top:122px;height:145px"></div>
<div class="pg" style="top:267px;height:146px"></div>
<div class="pg" style="top:413px;height:103px"></div>
<div class="pg" style="top:516px;height:146px"></div>
<div class="a" style="left:896px;top:662px;width:56px;height:215px;background:#535353"></div>
<div class="grip" style="left:910px;top:23px;width:29px;height:7px"></div>
<div class="grip" style="left:910px;top:127px;width:29px;height:7px"></div>
<div class="grip" style="left:910px;top:272px;width:29px;height:7px"></div>
<div class="grip" style="left:910px;top:418px;width:29px;height:7px"></div>
<div class="grip" style="left:910px;top:521px;width:29px;height:7px"></div>
<svg class="a" style="left:909px;top:36px" width="32" height="32" viewBox="0 0 32 32"><path d="M2 19 Q1 12 8 10 Q13 9 13 6 Q14 2 20 2 Q29 3 30 11 Q31 19 25 22 Q19 25 13 24 Q3 23 2 19Z" fill="#c8c8c8"/><g fill="#535353"><circle cx="7.5" cy="18" r="2.6"/><circle cx="12.5" cy="20.5" r="2.4"/><circle cx="18" cy="20" r="2.1"/><circle cx="23" cy="17.5" r="2"/><circle cx="24.5" cy="12.5" r="1.8"/><circle cx="23" cy="8" r="1.6"/></g></svg>
<svg class="a" style="left:910px;top:81px" width="30" height="30" viewBox="0 0 30 30"><defs><linearGradient id="sw" x1="0" y1="0" x2="1" y2="1"><stop offset="0" stop-color="#111"/><stop offset="1" stop-color="#eee"/></linearGradient></defs><path d="M4 4 Q24 5 27 26 H4Z" fill="url(#sw)" stroke="#c8c8c8" stroke-width="1.3"/><path d="M4 26 L8 6 M4 26 L13 8 M4 26 L18 11 M4 26 L22 15 M4 26 L25 20" stroke="#888" stroke-width="0.8"/></svg>
<svg class="a" style="left:910px;top:142px" width="30" height="30" viewBox="0 0 30 30"><rect x="4" y="7" width="22" height="16" fill="#c8c8c8"/><g fill="#8a8a8a"><rect x="5.5" y="8.5" width="5" height="6"/><rect x="19.5" y="8.5" width="5" height="6"/><rect x="5.5" y="16" width="5" height="5.5"/><rect x="12.5" y="16" width="5" height="5.5"/><rect x="19.5" y="16" width="5" height="5.5"/></g></svg>
<svg class="a" style="left:910px;top:183px" width="30" height="30" viewBox="0 0 30 30"><rect x="10" y="17" width="13" height="11" rx="1.5" fill="#c8c8c8"/><path d="M12 17 L9 8 Q5 6 7 3 Q11 4 10 8 M16 17 V5 H19 V8 H17 M19 17 L22 9 Q26 7 27 11 Q24 12 22 10" fill="#c8c8c8" stroke="#c8c8c8" stroke-width="1.6"/></svg>
<svg class="a" style="left:910px;top:226px" width="30" height="30" viewBox="0 0 30 30"><circle cx="15" cy="8" r="5.5" fill="#c8c8c8"/><circle cx="9" cy="16" r="5.5" fill="#c8c8c8"/><circle cx="21" cy="16" r="5.5" fill="#c8c8c8"/><path d="M15 14 Q15 23 11 26 H19 Q15 23 15 14Z" fill="#c8c8c8"/></svg>
<svg class="a" style="left:910px;top:287px" width="30" height="30" viewBox="0 0 30 30"><rect x="4" y="8" width="22" height="1.6" fill="#c8c8c8"/><rect x="4" y="13" width="22" height="2.6" fill="#c8c8c8"/><rect x="4" y="19" width="22" height="4" fill="#c8c8c8"/></svg>
<svg class="a" style="left:910px;top:330px" width="30" height="30" viewBox="0 0 30 30"><defs><linearGradient id="gg"><stop offset="0" stop-color="#111"/><stop offset="1" stop-color="#eee"/></linearGradient></defs><rect x="4.5" y="6.5" width="21" height="17" fill="url(#gg)" stroke="#c8c8c8" stroke-width="1.4"/></svg>
<svg class="a" style="left:910px;top:373px" width="30" height="30" viewBox="0 0 30 30"><circle cx="11.5" cy="12" r="8.5" fill="#c8c8c8"/><circle cx="17.5" cy="18" r="8.5" fill="#6c6c6c" stroke="#c8c8c8" stroke-width="1.5"/></svg>
<svg class="a" style="left:910px;top:434px" width="30" height="30" viewBox="0 0 30 30"><circle cx="15" cy="15" r="8.5" fill="#c8c8c8"/><circle cx="15" cy="15" r="11.5" fill="none" stroke="#c8c8c8" stroke-width="1.3" stroke-dasharray="2 2"/></svg>
<svg class="a" style="left:910px;top:477px" width="30" height="30" viewBox="0 0 30 30"><rect x="9" y="4" width="17" height="17" fill="none" stroke="#c8c8c8" stroke-width="1.5"/><rect x="4" y="16" width="8" height="8" fill="#535353" stroke="#c8c8c8" stroke-width="1.5"/><rect x="7" y="19" width="8" height="8" fill="#535353" stroke="#c8c8c8" stroke-width="1.5"/></svg>
<svg class="a" style="left:910px;top:537px" width="30" height="30" viewBox="0 0 30 30"><path d="M15 4 L27 11 L15 18 L3 11Z" fill="#c8c8c8"/><path d="M3 17 L15 24 L27 17" fill="none" stroke="#c8c8c8" stroke-width="3"/></svg>
<svg class="a" style="left:910px;top:579px" width="30" height="30" viewBox="0 0 30 30"><path d="M13 5 H4 V26 H25 V17" fill="none" stroke="#c8c8c8" stroke-width="2.8"/><path d="M13 17 L25 5 M17 4 H26 V13" fill="none" stroke="#c8c8c8" stroke-width="2.6"/></svg>
<svg class="a" style="left:910px;top:621px" width="30" height="30" viewBox="0 0 30 30"><rect x="4" y="4" width="15" height="15" fill="none" stroke="#c8c8c8" stroke-width="1.5"/><rect x="11" y="11" width="15" height="15" fill="#535353" stroke="#c8c8c8" stroke-width="1.5"/></svg>
<!-- right panel -->
<div class="a" style="left:956px;top:0;width:948px;height:877px;background:#535353"></div>
<div class="topbar" style="left:956px;width:948px"></div>
<svg class="a" style="left:1888px;top:4px" width="14" height="10" viewBox="0 0 14 10" fill="none" stroke="#cfcfcf" stroke-width="1.1"><path d="M2.5 2 L6 5 L2.5 8 M8 2 L11.5 5 L8 8"/></svg>
<div class="a" style="left:956px;top:18px;width:948px;height:41px;background:#434343;border-top:1px solid #3a3a3a;border-bottom:1px solid #393939"></div>
<div class="ptab" style="left:956px;width:106px"><span>Properties</span></div>
<div class="ptab" style="left:1063px;width:93px"><span>Libraries</span></div>
<div class="ptab" style="left:1157px;width:106px"><span>API Tester</span></div>
<div class="ptab" style="left:1264px;width:98px;background:#535353;color:#f2f2f2"><span>Darty-Ai.</span></div>
<!-- darty tabs -->
<div class="dtab" style="left:958px;width:100px"></div>
<div class="dtab" style="left:1059px;width:103px;background:#535353"></div>
<div class="dtab" style="left:1163px;width:114px"></div>
<div class="dtab" style="left:1279px;width:128px"></div>
<div class="dtab" style="left:1409px;width:100px"></div>
<div class="t" style="left:973px;top:77.5px;font-size:18.5px;color:#e6e6e6">Tags</div>
<svg class="a" style="left:1019px;top:74px" width="24" height="26" viewBox="0 0 24 26"><path d="M2 3 L10 2 L21 13 L12 22 L2 12 Z" fill="#58a6f0"/><circle cx="7" cy="7" r="2" fill="#3f3f3f"/><path d="M2 15 L12 25 L22 15" fill="none" stroke="#58a6f0" stroke-width="2"/></svg>
<div class="t" style="left:1074px;top:77.5px;font-size:18.5px;font-weight:bold;color:#f4f4f4">Data</div>
<svg class="a" style="left:1122px;top:75px" width="24" height="24" viewBox="0 0 24 24" fill="#1fc91f"><ellipse cx="11" cy="4.5" rx="10.5" ry="4"/><path d="M0.5 7.5 Q11 13 21.5 7.5 V12 Q11 17 0.5 12Z"/><path d="M0.5 15 Q11 20 21.5 15 V19.5 Q11 25 0.5 19.5Z"/></svg>
<div class="t" style="left:1178px;top:77.5px;font-size:18.5px;color:#e6e6e6">Export</div>
<svg class="a" style="left:1238px;top:75px" width="26" height="24" viewBox="0 0 26 24" fill="none" stroke="#58a6f0" stroke-width="2.6"><path d="M13 2 H2 V22 H13"/><path d="M8 12 H23 M18 7 L23 12 L18 17"/></svg>
<div class="t" style="left:1295px;top:77.5px;font-size:18.5px;color:#e6e6e6">Settings</div>
<svg class="a" style="left:1368px;top:75px" width="24" height="24" viewBox="0 0 24 24"><g fill="#58a6f0"><circle cx="12" cy="12" r="8"/><g id="tth"><rect x="10" y="1" width="4" height="5"/><rect x="10" y="18" width="4" height="5"/><rect x="1" y="10" width="5" height="4"/><rect x="18" y="10" width="5" height="4"/></g><g transform="rotate(45 12 12)"><rect x="10" y="1" width="4" height="5"/><rect x="10" y="18" width="4" height="5"/><rect x="1" y="10" width="5" height="4"/><rect x="18" y="10" width="5" height="4"/></g></g><circle cx="12" cy="12" r="3.5" fill="#3f3f3f"/></svg>
<div class="t" style="left:1425px;top:77.5px;font-size:18.5px;color:#e6e6e6">Help</div>
<svg class="a" style="left:1469px;top:75px" width="24" height="24" viewBox="0 0 24 24"><circle cx="11" cy="12" r="10.5" fill="#58a6f0"/><text x="6" y="19" font-family="Liberation Sans" font-weight="bold" font-size="17" fill="#3f3f3f">?</text></svg>
<svg class="a" style="left:1871px;top:70px" width="32" height="30" viewBox="0 0 32 30" fill="#1fc21f"><circle cx="11" cy="6" r="5"/><path d="M3 24 Q3 12 11 12 Q16 12 17 15 L13 24 Z"/><g transform="translate(22,19)"><circle r="5"/><g><rect x="-1.5" y="-8" width="3" height="16"/><rect x="-8" y="-1.5" width="16" height="3"/><g transform="rotate(45)"><rect x="-1.5" y="-8" width="3" height="16"/><rect x="-8" y="-1.5" width="16" height="3"/></g></g><circle r="2" fill="#535353"/></g></svg>
<!-- toolbar row -->
<svg class="a" style="left:972px;top:118px" width="65" height="72" viewBox="0 0 65 72"><defs><linearGradient id="lg" x1="0" x2="1"><stop offset="0" stop-color="#1fa81f"/><stop offset="1" stop-color="#1fd41f"/></linearGradient></defs><path fill="url(#lg)" d="M8.5 9 Q8 7 10 7 L31 7 Q33 7 34.5 8.5 L53 30 Q54.5 32.5 52 33.5 L32.5 33.5 Q28 29 24.5 29 Q20 29 16 36 Q20 42.7 24.5 42.7 Q28 42.7 32.5 38 L52 38 Q54.5 39 53 41.5 L34.5 63 Q33 64.5 31 64.5 L10 64.5 Q8 64.5 8.5 62 Q10.5 36 8.5 9 Z"/></svg>
<div class="bb" style="left:1046px;top:136px;width:41px;height:37px"></div>
<svg class="a" style="left:1054px;top:144px" width="25" height="21" viewBox="0 0 25 21" fill="none" stroke="#fff" stroke-width="2.2"><path d="M2 10.5 Q12.5 0 23 10.5 Q12.5 21 2 10.5Z"/><circle cx="12.5" cy="10.5" r="3.5"/><path d="M4 2 L21 19"/></svg>
<div class="bb" style="left:1091px;top:136px;width:41px;height:37px"></div>
<svg class="a" style="left:1099px;top:144px" width="25" height="21" viewBox="0 0 25 21"><path d="M1 10.5 Q12.5 -1 24 10.5 Q12.5 22 1 10.5Z" fill="#fff"/><circle cx="12.5" cy="10.5" r="4.5" fill="#3a8ee8"/><circle cx="12.5" cy="10.5" r="2" fill="#fff"/></svg>
<div class="a" style="left:1140px;top:133px;width:113px;height:43px;background:#404040;border:1.5px solid #7a7a7a;border-radius:6px"></div>
<div class="t" style="left:1148px;top:145px;font-size:20px;color:#e4e4e4">1A</div>
<svg class="a" style="left:1260px;top:144px" width="20" height="20" viewBox="0 0 20 20"><circle cx="10" cy="10" r="9" fill="#5ea6ee"/><text x="5.5" y="15.5" font-family="Liberation Sans" font-weight="bold" font-size="15" fill="#535353">?</text></svg>
<div class="bb" style="left:1289px;top:136px;width:90px;height:37px"></div>
<svg class="a" style="left:1299px;top:141px" width="74" height="27" viewBox="0 0 74 27"><g fill="#b9d8f8"><rect x="2" y="10" width="13" height="13" opacity="0.75"/></g><g fill="none" stroke="#3a8ee8" stroke-width="1"><path d="M2 14 H15 M2 18 H15 M6.3 10 V23 M10.6 10 V23"/></g><rect x="24" y="6" width="16" height="17" fill="#fff"/><g stroke="#3a8ee8" stroke-width="1.3"><path d="M24 11 H40 M24 16 H40 M29.3 11 V23 M34.6 11 V23"/></g><rect x="49" y="2" width="20" height="21" fill="#b9d8f8"/><g stroke="#3a8ee8" stroke-width="1.3"><path d="M49 8 H69 M49 15 H69 M55.6 8 V23 M62.3 8 V23"/></g></svg>
<div class="bb" style="left:1384px;top:136px;width:41px;height:37px"></div>
<svg class="a" style="left:1392px;top:146px" width="25" height="16" viewBox="0 0 25 16" fill="none" stroke="#fff" stroke-width="2"><path d="M2 1 V15 M23 1 V15 M4 8 H21"/><path d="M8 4 L4 8 L8 12 M17 4 L21 8 L17 12"/></svg>
<!-- row 2 -->
<svg class="a" style="left:975px;top:208px" width="17" height="13" viewBox="0 0 17 13" fill="#f0f0f0"><path d="M3 12 Q0 12 0 9 Q0 6 3 6 Q4 1 9 1 Q13 1 14 5 Q17 5 17 8.5 Q17 12 14 12Z"/></svg>
<div class="t" style="left:997px;top:208px;font-size:16px;color:#e8e8e8">[bracket test 2] Sheet1</div>
<div class="bb" style="left:1166px;top:198px;width:40px;height:37px"></div>
<svg class="a" style="left:1173px;top:205px" width="26" height="24" viewBox="0 0 26 24"><g fill="#fff"><ellipse cx="10" cy="3.5" rx="9" ry="3"/><path d="M1 6 Q10 10 19 6 V10 Q10 14 1 10Z"/><path d="M1 12 Q10 16 19 12 V16 Q10 20 1 16Z"/><path d="M1 18 Q10 22 14 20 V22 Q10 24 1 21Z"/></g><circle cx="19" cy="17" r="6.5" fill="#3a8ee8"/><g fill="none" stroke="#fff" stroke-width="1.8"><path d="M14.5 16 Q15 12 19 12 Q22 12 23 14"/><path d="M23.5 18 Q23 22 19 22 Q16 22 15 20"/></g></svg>
<div class="bb" style="left:1212px;top:198px;width:40px;height:37px"></div>
<svg class="a" style="left:1219px;top:206px" width="26" height="24" viewBox="0 0 26 24"><path d="M1 3 H9 L11 5 H21 V12 H1Z M1 6 H21 V19 H1Z" fill="#fff"/><circle cx="19" cy="17" r="6.5" fill="#fff" stroke="#3a8ee8" stroke-width="1.5"/><path d="M19 13 V17 L22 19" fill="none" stroke="#3a8ee8" stroke-width="1.6"/></svg>
<div class="bb" style="left:1258px;top:198px;width:40px;height:37px"></div>
<svg class="a" style="left:1266px;top:207px" width="24" height="19" viewBox="0 0 24 19" fill="#fff"><path d="M1 2 H8 L10 4 H19 V7 H5 L1 17Z"/><path d="M5 8 H23 L19 18 H1Z"/></svg>
<div class="bb" style="left:1304px;top:198px;width:40px;height:37px"></div>
<svg class="a" style="left:1312px;top:208px" width="24" height="16" viewBox="0 0 24 16" fill="#fff"><path d="M4 15 Q0 15 0 11 Q0 7 4 7 Q5 1 11 1 Q17 1 18 6 Q23 6 23 10.5 Q23 15 19 15Z"/></svg>
<div class="bb" style="left:1350px;top:198px;width:36px;height:37px"></div>
<svg class="a" style="left:1359px;top:207px" width="18" height="18" viewBox="0 0 18 18" stroke="#fff" stroke-width="2.4"><path d="M2 2 L16 16 M16 2 L2 16"/></svg>
<!-- table header -->
<div class="hrow" style="top:247px;background:#9b9b9b;border-top-left-radius:2px"></div>
<div class="hrow" style="top:292px;background:#acacac"></div>
<div class="hrow" style="top:337px;background:#b7b7b7"></div>
<div class="hrow" style="top:382px;background:#d3d3d3"></div>
<div class="a" style="left:977px;top:427px;width:911px;height:2px;background:#6a6a6a"></div>
<div class="cs" style="left:1051.5px;top:247px;height:180px;background:#666"></div>
<div class="cs" style="left:1273px;top:256px;height:162px"></div>
<div class="cs" style="left:1498px;top:256px;height:162px"></div>
<div class="cs" style="left:1723px;top:256px;height:162px"></div>
<!-- header content -->
<svg class="a" style="left:998px;top:257px" width="25" height="26" viewBox="0 0 25 26"><path d="M1 2 L9 1 L19 11 L11 19 L1 9Z" fill="#222"/><circle cx="5" cy="5" r="1.6" fill="#9b9b9b"/><path d="M1 12 L11 22 L16 17" fill="none" stroke="#222" stroke-width="1.8"/><circle cx="17.5" cy="16.5" r="5.5" fill="#9b9b9b" stroke="#222" stroke-width="1.6"/><circle cx="17" cy="16" r="2.3" fill="none" stroke="#222" stroke-width="1.3"/><path d="M18.5 17.5 L21 20" stroke="#222" stroke-width="1.4"/></svg>
<svg class="a" style="left:1060px;top:260px" width="18" height="18" viewBox="0 0 18 18"><defs><linearGradient id="gb1068" x1="0" y1="0" x2="0" y2="1"><stop offset="0" stop-color="#6af76a"/><stop offset="0.25" stop-color="#4cf04c"/><stop offset="0.3" stop-color="#2ad21a"/><stop offset="0.5" stop-color="#22c800"/><stop offset="0.5" stop-color="#00a60a"/><stop offset="1" stop-color="#00a000"/></linearGradient></defs><circle cx="9" cy="9" r="8.2" fill="url(#gb1068)" stroke="#148a14" stroke-width="0.9"/></svg>
<div class="t mono" style="left:1153px;top:264px;font-size:17px;color:#333">*</div>
<div class="t mono" style="left:1238px;top:264px;font-size:15px;font-weight:bold;color:#222">[A]</div>
<div class="t mono" style="left:1282px;top:265px;font-size:17px;color:#333">*</div>
<div class="t mono" style="left:1463px;top:264px;font-size:15px;font-weight:bold;color:#222">[B]</div>
<svg class="a" style="left:1510px;top:260px" width="18" height="18" viewBox="0 0 18 18"><defs><linearGradient id="gb1518" x1="0" y1="0" x2="0" y2="1"><stop offset="0" stop-color="#6af76a"/><stop offset="0.25" stop-color="#4cf04c"/><stop offset="0.3" stop-color="#2ad21a"/><stop offset="0.5" stop-color="#22c800"/><stop offset="0.5" stop-color="#00a60a"/><stop offset="1" stop-color="#00a000"/></linearGradient></defs><circle cx="9" cy="9" r="8.2" fill="url(#gb1518)" stroke="#148a14" stroke-width="0.9"/></svg>
<div class="t mono" style="left:1603px;top:264px;font-size:17px;color:#333">*</div>
<div class="t mono" style="left:1688px;top:264px;font-size:15px;font-weight:bold;color:#222">[C]</div>
<div class="t mono" style="left:1732px;top:265px;font-size:17px;color:#333">*</div>
<svg class="a" style="left:998px;top:305px" width="24" height="20" viewBox="0 0 24 20" fill="#222"><rect x="1" y="7" width="4" height="5"/><path d="M5 9.5 H10 M10 4 V16 M10 4 H14 M10 9.5 H14 M10 16 H14" stroke="#222" stroke-width="1.4" fill="none"/><rect x="17" y="2" width="4" height="4"/><rect x="17" y="8" width="4" height="4"/><rect x="17" y="14" width="4" height="4"/></svg>
<div class="t mono" style="left:1057px;top:308.5px;font-size:15px;font-weight:bold;color:#1e1e1e">text</div>
<div class="t mono" style="left:1282px;top:311.0px;font-size:13px;color:#333">text</div>
<div class="t mono" style="left:1507px;top:308.5px;font-size:15px;font-weight:bold;color:#1e1e1e">text</div>
<div class="t mono" style="left:1732px;top:311.0px;font-size:13px;color:#333">text</div>
<svg class="a" style="left:998px;top:349px" width="24" height="20" viewBox="0 0 24 20" fill="none" stroke="#222" stroke-width="1.4"><path d="M2 3 H6 M12 3 H22 M2 10 H14 M20 10 H22 M2 17 H5 M11 17 H22"/><circle cx="9" cy="3" r="2.8"/><circle cx="17" cy="10" r="2.8"/><circle cx="8" cy="17" r="2.8"/></svg>
<div class="t mono" style="left:1057px;top:353.5px;font-size:15px;font-weight:bold;color:#1e1e1e">find: a</div>
<div class="t mono" style="left:1282px;top:353.5px;font-size:15px;font-weight:bold;color:#1e1e1e">replace</div>
<div class="t mono" style="left:1507px;top:353.5px;font-size:15px;font-weight:bold;color:#1e1e1e">find: b</div>
<div class="t mono" style="left:1732px;top:353.5px;font-size:15px;font-weight:bold;color:#1e1e1e">replace</div>
<svg class="a" style="left:999px;top:395px" width="22" height="21" viewBox="0 0 22 21" fill="#1e1e1e"><path d="M1 1 H20 V6 H18 Q17.5 3 15 3 H12.5 V17.5 Q12.5 18.5 14.5 18.5 V20 H6.5 V18.5 Q8.5 18.5 8.5 17.5 V3 H6 Q3.5 3 3 6 H1Z"/></svg>
<!-- body -->
<div class="a" style="left:977px;top:429px;width:911px;height:401px;background:#1b1e21"></div>
<div class="brow" style="top:428px;background:#1b1e21"></div>
<div class="t mono" style="left:1004px;top:444px;font-size:14px;color:#a8a8a8;letter-spacing:2px;margin-left:-1px">[1]</div>
<div class="t mono" style="left:1078px;top:444px;font-size:15px;color:#c4c4c4">a</div>
<div class="t mono" style="left:1303px;top:444px;font-size:15.5px;font-weight:bold;color:#f2f2f2">bar</div>
<div class="t mono" style="left:1528px;top:444px;font-size:15px;color:#c4c4c4">b</div>
<div class="t mono" style="left:1753px;top:444px;font-size:15.5px;font-weight:bold;color:#f2f2f2;width:135px;overflow:hidden">asdfgsadfg</div>
<div class="brow" style="top:473px;background:#222528"></div>
<div class="t mono" style="left:1004px;top:489px;font-size:14px;color:#a8a8a8;letter-spacing:2px;margin-left:-1px">[2]</div>
<div class="t mono" style="left:1078px;top:489px;font-size:15px;color:#c4c4c4">a</div>
<div class="t mono" style="left:1303px;top:489px;font-size:15.5px;font-weight:bold;color:#f2f2f2">baz</div>
<div class="t mono" style="left:1528px;top:489px;font-size:15px;color:#c4c4c4">b</div>
<div class="t mono" style="left:1753px;top:489px;font-size:15.5px;font-weight:bold;color:#f2f2f2;width:135px;overflow:hidden">hjkru</div>
<div class="brow" style="top:518px;background:#1b1e21"></div>
<div class="t mono" style="left:1004px;top:534px;font-size:14px;color:#a8a8a8;letter-spacing:2px;margin-left:-1px">[3]</div>
<div class="t mono" style="left:1078px;top:534px;font-size:15px;color:#c4c4c4">a</div>
<div class="t mono" style="left:1303px;top:534px;font-size:15.5px;font-weight:bold;color:#f2f2f2">vas</div>
<div class="t mono" style="left:1528px;top:534px;font-size:15px;color:#c4c4c4">b</div>
<div class="t mono" style="left:1753px;top:534px;font-size:15.5px;font-weight:bold;color:#f2f2f2;width:135px;overflow:hidden">dfjeryhwe5ujhds</div>
<div class="brow" style="top:563px;background:#222528"></div>
<div class="t mono" style="left:1004px;top:579px;font-size:14px;color:#a8a8a8;letter-spacing:2px;margin-left:-1px">[4]</div>
<div class="t mono" style="left:1078px;top:579px;font-size:15px;color:#c4c4c4">a</div>
<div class="t mono" style="left:1303px;top:579px;font-size:15.5px;font-weight:bold;color:#f2f2f2">trev</div>
<div class="t mono" style="left:1528px;top:579px;font-size:15px;color:#c4c4c4">b</div>
<div class="t mono" style="left:1753px;top:579px;font-size:15.5px;font-weight:bold;color:#f2f2f2;width:135px;overflow:hidden">sdfgsdfgs</div>
<div class="a" style="left:1051px;top:429px;width:1.5px;height:178px;background:#5e6164"></div>
<div class="a" style="left:977px;top:830px;width:911px;height:10px;background:#393c3e"></div>
<div class="a" style="left:1051px;top:830px;width:1.5px;height:10px;background:#5e6164"></div>
<div class="a" style="left:1054px;top:831px;width:344px;height:8px;border-radius:4px;background:#909292"></div>
<div class="a" style="left:977px;top:840px;width:911px;height:1.5px;background:#666"></div>
<div class="a" style="left:975px;top:247px;width:2px;height:594px;background:#646464"></div>
<svg class="a" style="left:1106px;top:711px" width="20" height="30" viewBox="0 0 20 30"><path d="M1.5 1.5 V23 L6.5 18.5 L10 27 L14 25.3 L10.6 17 L17 17 Z" fill="#111" stroke="#fff" stroke-width="1.6" stroke-linejoin="round"/></svg>
<svg class="a" style="left:1884px;top:32px" width="16" height="14" viewBox="0 0 16 14" fill="#cfcfcf"><rect y="1" width="16" height="1.6"/><rect y="6" width="16" height="1.6"/><rect y="11" width="16" height="1.6"/></svg>
</div>
<div id="wall" class="a"></div><div id="wallL" class="a"></div><div id="wallR" class="a"></div><div id="wline" class="a"></div>
<div id="dock" class="a"></div>
<!-- dock icons -->
<svg class="a" style="left:35.0px;top:1029px" width="30" height="30" viewBox="0 0 30 30"><defs><clipPath id="fc"><rect x="0.5" y="0.5" width="29" height="29" rx="7"/></clipPath></defs><g clip-path="url(#fc)"><rect width="30" height="30" fill="#e6ebf1"/><path d="M0 0 H17 Q12 10 13 17 H16 L15 30 H0Z" fill="#1d8ef2"/></g><path d="M8 21 Q15 26 23 21" fill="none" stroke="#333" stroke-width="1.2"/><rect x="8" y="9" width="1.4" height="3" fill="#222"/><rect x="21" y="9" width="1.4" height="3" fill="#222"/></svg>
<svg class="a" style="left:73.8px;top:1029px" width="30" height="30" viewBox="0 0 30 30"><rect x="0.5" y="0.5" width="29" height="29" rx="7" fill="#d4d8de" /><rect x="4" y="4" width="6" height="6" rx="1.5" fill="#3dd13d"/><rect x="12" y="4" width="6" height="6" rx="1.5" fill="#fdbb1a"/><rect x="20" y="4" width="6" height="6" rx="1.5" fill="#ff7a1a"/><rect x="4" y="12" width="6" height="6" rx="1.5" fill="#e0262a"/><rect x="12" y="12" width="6" height="6" rx="1.5" fill="#999"/><rect x="20" y="12" width="6" height="6" rx="1.5" fill="#ff3b6b"/><rect x="4" y="20" width="6" height="6" rx="1.5" fill="#a542e8"/><rect x="12" y="20" width="6" height="6" rx="1.5" fill="#1ea8ff"/><rect x="20" y="20" width="6" height="6" rx="1.5" fill="#21c9a3"/></svg>
<svg class="a" style="left:112.7px;top:1029px" width="30" height="30" viewBox="0 0 30 30"><rect x="0.5" y="0.5" width="29" height="29" rx="7" fill="#0d0d0d" /><rect x="4" y="5" width="10" height="9" fill="#e8e8e8"/><rect x="16" y="8" width="10" height="12" fill="#d8d8d8"/><rect x="4" y="16" width="10" height="9" fill="#e8e8e8"/><circle cx="9" cy="15" r="1.2" fill="#31d158"/><circle cx="23" cy="21" r="1.2" fill="#b05cf0"/></svg>
<svg class="a" style="left:151.6px;top:1029px" width="30" height="30" viewBox="0 0 30 30"><defs><linearGradient id="ml" x1="0" y1="0" x2="0" y2="1"><stop offset="0" stop-color="#25b1fb"/><stop offset="1" stop-color="#0f6ff0"/></linearGradient></defs><rect x="0.5" y="0.5" width="29" height="29" rx="7" fill="url(#ml)" /><rect x="6" y="9" width="18" height="12" rx="1" fill="#f4f6fa"/><path d="M6 9 L15 16 L24 9" fill="none" stroke="#b9c6d6" stroke-width="1"/></svg>
<svg class="a" style="left:190.4px;top:1029px" width="30" height="30" viewBox="0 0 30 30"><rect x="0.5" y="0.5" width="29" height="29" rx="7" fill="#ffffff" /><path d="M6 14 L15 7 L24 14 V23 H6Z" fill="none" stroke="#3f7fd9" stroke-width="1.4"/><path d="M9 17 H21 L19 21 H9Z" fill="#f0b43a"/><path d="M8 15 H22" stroke="#3f7fd9" stroke-width="1.2"/></svg>
<svg class="a" style="left:229.2px;top:1029px" width="30" height="30" viewBox="0 0 30 30"><rect x="0.5" y="0.5" width="29" height="29" rx="7" fill="#8ed67a" /><path d="M0.5 18 L30 8 V14 L0.5 24Z" fill="#f5f5f5"/><path d="M11 0.5 V30 H16 V0.5Z" fill="#f5f5f5"/><path d="M0.5 22 V29.5 H8 Z" fill="#f07cb4"/><path d="M22 22 L29.5 22 V29.5 H18Z" fill="#f5c53c"/><circle cx="14" cy="19" r="5.5" fill="#2f84f0" stroke="#fff" stroke-width="1.2"/><path d="M14 15 L17 22 L14 20.5 L11 22Z" fill="#fff"/><rect x="12" y="1" width="3" height="10" fill="#3b8df2"/></svg>
<svg class="a" style="left:268.1px;top:1029px" width="30" height="30" viewBox="0 0 30 30"><rect x="0.5" y="0.5" width="29" height="29" rx="7" fill="#b08850" /><circle cx="15" cy="13" r="9" fill="#a07a45" stroke="#c39a62" stroke-width="1"/><circle cx="15" cy="11" r="3" fill="#8a6536"/><path d="M9 19 Q15 14 21 19" fill="#8a6536"/><rect x="27" y="6" width="3" height="18" fill="#6aa"/></svg>
<svg class="a" style="left:306.9px;top:1029px" width="30" height="30" viewBox="0 0 30 30"><rect x="0.5" y="0.5" width="29" height="29" rx="7" fill="#ffffff" /><path d="M0.5 7.5 V7 Q0.5 0.5 7 0.5 H23 Q29.5 0.5 29.5 7 V9 H0.5Z" fill="#f14437"/><text x="15" y="7.5" text-anchor="middle" font-family="Liberation Sans" font-size="6" font-weight="bold" fill="#fff">DEC</text><text x="15" y="25.5" text-anchor="middle" font-family="Liberation Sans" font-size="16" fill="#333">28</text></svg>
<svg class="a" style="left:345.8px;top:1029px" width="30" height="30" viewBox="0 0 30 30"><rect x="0.5" y="0.5" width="29" height="29" rx="7" fill="#8e8e8e" /><circle cx="15" cy="15" r="11" fill="#5a5a5a"/><circle cx="15" cy="15" r="9" fill="#8e8e8e" stroke="#3a3a3a" stroke-width="2"/><circle cx="15" cy="15" r="3" fill="#3a3a3a"/><path d="M15 6 V12 M7 19 L12 16.5 M23 19 L18 16.5" stroke="#3a3a3a" stroke-width="2"/></svg>
<svg class="a" style="left:384.7px;top:1029px" width="30" height="30" viewBox="0 0 30 30"><rect x="0.5" y="0.5" width="29" height="29" rx="7" fill="#ffffff" /><rect x="11" y="4" width="4" height="10" rx="2" fill="#36c5f0"/><rect x="4" y="15" width="10" height="4" rx="2" fill="#e01e5a"/><rect x="15" y="16" width="4" height="10" rx="2" fill="#ecb22e"/><rect x="16" y="11" width="10" height="4" rx="2" fill="#2eb67d"/></svg>
<svg class="a" style="left:423.5px;top:1029px" width="30" height="30" viewBox="0 0 30 30"><rect x="0.5" y="0.5" width="29" height="29" rx="7" fill="#ffffff" /><circle cx="15" cy="15" r="11" fill="#dd4b3e"/><path d="M15 15 L5.43 20.5 A11 11 0 0 0 20.5 24.57Z" fill="#1da462"/><path d="M15 15 L20.5 24.57 A11 11 0 0 0 26 13.9 L24.57 9.5Z" fill="#ffcd46"/><circle cx="15" cy="15" r="4.95" fill="#fff"/><circle cx="15" cy="15" r="3.8499999999999996" fill="#4c8bf5"/></svg>
<svg class="a" style="left:462.4px;top:1029px" width="30" height="30" viewBox="0 0 30 30"><rect x="0.5" y="0.5" width="29" height="29" rx="7" fill="#20123a" /><circle cx="15" cy="15" r="11" fill="#ff7139"/><circle cx="16" cy="15" r="7" fill="#7542e5"/><path d="M4 12 Q8 4 16 5 Q10 8 9 14Z" fill="#ffbd4f"/></svg>
<svg class="a" style="left:498.2px;top:1026px" width="36" height="36" viewBox="0 0 36 36"><circle cx="17" cy="17" r="17.5" fill="#dd4b3e"/><path d="M17 17 L1.7750000000000004 25.75 A17.5 17.5 0 0 0 25.75 32.225Z" fill="#1da462"/><path d="M17 17 L25.75 32.225 A17.5 17.5 0 0 0 34.5 15.25 L32.225 8.25Z" fill="#ffcd46"/><circle cx="17" cy="17" r="7.875" fill="#fff"/><circle cx="17" cy="17" r="6.125" fill="#4c8bf5"/><rect x="25" y="18" width="3" height="16" fill="#e8463a"/><rect x="30" y="18" width="3" height="16" fill="#e8463a"/></svg>
<svg class="a" style="left:540.0px;top:1029px" width="30" height="30" viewBox="0 0 30 30"><rect x="0.5" y="0.5" width="29" height="29" rx="7" fill="#b40f05" /><path d="M8 23 Q10 17 15 12 Q17 6 15 5 Q13 6 14 11 Q17 19 23 20 Q25 20 24 18 Q20 17 13 18 Q9 20 8 23Z" fill="none" stroke="#fff" stroke-width="1.6"/></svg>
<svg class="a" style="left:578.9px;top:1029px" width="30" height="30" viewBox="0 0 30 30"><defs><linearGradient id="zm" x1="0" y1="0" x2="0" y2="1"><stop offset="0" stop-color="#2d8cff"/><stop offset="1" stop-color="#0b5cff"/></linearGradient></defs><rect x="0.5" y="0.5" width="29" height="29" rx="7" fill="url(#zm)" /><text x="15" y="18" text-anchor="middle" font-family="Liberation Sans" font-size="7.5" font-weight="bold" fill="#fff">zoom</text></svg>
<svg class="a" style="left:617.8px;top:1029px" width="30" height="30" viewBox="0 0 30 30"><rect x="0.5" y="0.5" width="29" height="29" rx="7" fill="#ffffff" /><path d="M20 4 L25 6.5 V23.5 L20 26 L9 16.5 L5.5 19.5 L4 18.5 V11.5 L5.5 10.5 L9 13.5Z" fill="#1f8ad2"/><path d="M20 9 V21 L12.5 15Z" fill="#fff"/></svg>
<svg class="a" style="left:656.6px;top:1029px" width="30" height="30" viewBox="0 0 30 30"><rect x="0.5" y="0.5" width="29" height="29" rx="7" fill="#ffffff" /><circle cx="20" cy="8" r="3" fill="#7b83eb"/><rect x="15" y="12" width="11" height="11" rx="4" fill="#7b83eb"/><circle cx="13" cy="7" r="4" fill="#5059c9"/><rect x="7" y="10" width="14" height="14" rx="3" fill="#5059c9"/><rect x="4" y="10" width="11" height="11" rx="1" fill="#4b53bc"/><text x="9.5" y="19" text-anchor="middle" font-family="Liberation Sans" font-size="9" font-weight="bold" fill="#fff">T</text></svg>
<svg class="a" style="left:695.5px;top:1029px" width="30" height="30" viewBox="0 0 30 30"><defs><linearGradient id="sg" x1="0" y1="0" x2="0" y2="1"><stop offset="0" stop-color="#6fb6e8"/><stop offset="1" stop-color="#3b86c8"/></linearGradient></defs><rect x="0.5" y="0.5" width="29" height="29" rx="7" fill="url(#sg)" /><path d="M23 7 H11 Q7 7 8 11 L19 18 Q21 21 17 23 H7" fill="none" stroke="#fff" stroke-width="4"/></svg>
<svg class="a" style="left:734.3px;top:1029px" width="30" height="30" viewBox="0 0 30 30"><rect x="0.5" y="0.5" width="29" height="29" rx="7" fill="#330000" /><text x="15" y="20" text-anchor="middle" font-family="Liberation Sans" font-size="14" font-weight="bold" fill="#ff9a00">Ai</text></svg>
<svg class="a" style="left:773.1px;top:1029px" width="30" height="30" viewBox="0 0 30 30"><rect x="0.5" y="0.5" width="29" height="29" rx="7" fill="#330000" /><text x="15" y="20" text-anchor="middle" font-family="Liberation Sans" font-size="14" font-weight="bold" fill="#ff9a00">Ai</text></svg>
<svg class="a" style="left:812.0px;top:1029px" width="30" height="30" viewBox="0 0 30 30"><rect x="0.5" y="0.5" width="29" height="29" rx="7" fill="#330000" /><text x="15" y="20" text-anchor="middle" font-family="Liberation Sans" font-size="14" font-weight="bold" fill="#ff9a00">Ai</text></svg>
<svg class="a" style="left:850.9px;top:1029px" width="30" height="30" viewBox="0 0 30 30"><rect x="0.5" y="0.5" width="29" height="29" rx="7" fill="#330000" /><text x="15" y="20" text-anchor="middle" font-family="Liberation Sans" font-size="14" font-weight="bold" fill="#ff9a00">Ai</text></svg>
<svg class="a" style="left:889.7px;top:1029px" width="30" height="30" viewBox="0 0 30 30"><rect x="0.5" y="0.5" width="29" height="29" rx="7" fill="#ef443b" /><path d="M10 9 L16 15 L10 21 L4 15Z" fill="#fff"/><path d="M17 9 L23 15 L17 21" fill="none" stroke="#fff" stroke-width="2.4"/></svg>
<svg class="a" style="left:928.6px;top:1029px" width="30" height="30" viewBox="0 0 30 30"><rect x="0.5" y="0.5" width="29" height="29" rx="7" fill="#49021f" /><text x="15" y="20" text-anchor="middle" font-family="Liberation Sans" font-size="14" font-weight="bold" fill="#ff3366">Id</text></svg>
<svg class="a" style="left:965.4px;top:1027px" width="34" height="34" viewBox="0 0 34 34"><rect x="0.5" y="0.5" width="29" height="29" rx="8" fill="#a05c1e" /><path d="M6 6 Q10 5 15 8 Q20 5 24 6 V19 Q20 18 15 20 Q10 18 6 19Z" fill="none" stroke="#e9b56c" stroke-width="1.4"/><text x="15" y="27" text-anchor="middle" font-family="Liberation Sans" font-size="6" font-weight="bold" fill="#e9b56c">(CHM)</text></svg>
<svg class="a" style="left:1006.2px;top:1029px" width="30" height="30" viewBox="0 0 30 30"><rect x="0.5" y="0.5" width="29" height="29" rx="7" fill="#1c1d1f" stroke="#555" stroke-width="1"/><text x="5" y="13" font-family="Liberation Mono" font-size="8" font-weight="bold" fill="#3fd13f">$|</text></svg>
<svg class="a" style="left:1045.1px;top:1029px" width="30" height="30" viewBox="0 0 30 30"><rect x="0.5" y="0.5" width="29" height="29" rx="7" fill="#1c1d1f" stroke="#666" stroke-width="1"/><text x="5" y="12" font-family="Liberation Mono" font-size="8" font-weight="bold" fill="#eee">&gt;_</text></svg>
<svg class="a" style="left:1084.0px;top:1029px" width="30" height="30" viewBox="0 0 30 30"><rect x="0.5" y="0.5" width="29" height="29" rx="7" fill="#175ddc" /><path d="M8 6 H22 V15 Q22 22 15 25 Q8 22 8 15Z" fill="#fff"/><path d="M15 8 H20 V15 Q20 20 15 22.5Z" fill="#175ddc"/></svg>
<svg class="a" style="left:1122.8px;top:1028px" width="38" height="38" viewBox="0 0 38 38"><rect x="0.5" y="0.5" width="29" height="29" rx="7" fill="#2c2c2c" /><g fill="#777"><rect x="3" y="3" width="7" height="5"/><rect x="12" y="3" width="7" height="5"/><rect x="21" y="3" width="6" height="5"/><rect x="3" y="10" width="7" height="5"/><rect x="21" y="10" width="6" height="5" fill="#c33"/></g><rect x="8" y="14" width="20" height="15" rx="3" fill="#9a9a9a"/><circle cx="18" cy="22" r="5" fill="#222"/><circle cx="18" cy="22" r="2.5" fill="#888"/></svg>
<svg class="a" style="left:1160.7px;top:1026px" width="32" height="34" viewBox="0 0 32 34"><path d="M9 10 Q9 2 17 2 Q25 2 25 10" fill="none" stroke="#e63b2e" stroke-width="3.5"/><rect x="3" y="8" width="25" height="23" rx="8" fill="#e63b2e" transform="rotate(-12 15 19)"/><text x="15" y="26" text-anchor="middle" font-family="Liberation Sans" font-size="17" font-weight="bold" fill="#fff">e</text></svg>
<svg class="a" style="left:1200.5px;top:1029px" width="30" height="30" viewBox="0 0 30 30"><defs><linearGradient id="as" x1="0" y1="0" x2="0" y2="1"><stop offset="0" stop-color="#1ec3f7"/><stop offset="1" stop-color="#1670e8"/></linearGradient></defs><rect x="0.5" y="0.5" width="29" height="29" rx="7" fill="url(#as)" /><path d="M15 6 L8 20 M15 6 L22 20 M6 18 H24 M11 14 L19 14" stroke="#fff" stroke-width="2" fill="none"/></svg>
<svg class="a" style="left:1238.4px;top:1027px" width="34" height="32" viewBox="0 0 34 32"><path d="M2 16 L20 4 L26 14 L26 24 H2Z" fill="#d9d9d9"/><rect x="2" y="18" width="24" height="10" fill="#b9b9b9"/><path d="M18 8 L24 14" stroke="#2fa84f" stroke-width="3"/><rect x="25" y="14" width="3" height="16" fill="#e8463a"/><rect x="30" y="14" width="3" height="16" fill="#e8463a"/></svg>
<svg class="a" style="left:1275.2px;top:1027px" width="36" height="33" viewBox="0 0 36 33"><path d="M3 4 Q9 -1 15 4 Q21 -1 28 4 V18 H3Z" fill="#f2c44b" stroke="#a88a30" stroke-width="1"/><rect x="10" y="13" width="20" height="14" fill="#3a80d0"/><g fill="#fff"><rect x="12" y="16" width="3" height="3"/><rect x="17" y="16" width="3" height="3"/><rect x="22" y="16" width="3" height="3"/><rect x="12" y="21" width="3" height="3"/><rect x="17" y="21" width="3" height="3"/></g><circle cx="8" cy="25" r="6" fill="#ddd" stroke="#555" stroke-width="1.2"/><rect x="27" y="13" width="3" height="17" fill="#e8463a"/><rect x="31" y="13" width="3" height="17" fill="#e8463a"/></svg>
<svg class="a" style="left:1317.0px;top:1029px" width="30" height="30" viewBox="0 0 30 30"><path d="M15 1 L28 5.5 L26 22 L15 29 L4 22 L2 5.5Z" fill="#dd0031"/><path d="M15 1 L28 5.5 L26 22 L15 29Z" fill="#c3002f"/><path d="M15 5 L8 23 H11 L12.5 19 H17.5 L19 23 H22Z M13.5 16 L15 11.5 L16.5 16Z" fill="#fff"/></svg>
<svg class="a" style="left:1355.9px;top:1029px" width="30" height="30" viewBox="0 0 30 30"><rect x="0.5" y="0.5" width="29" height="29" rx="7" fill="#f7c61c" /><circle cx="10" cy="14" r="2" fill="#222"/><circle cx="20" cy="14" r="2" fill="#222"/><path d="M9 20 Q15 16 21 20 Q18 25 15 24 Q12 25 9 20Z" fill="#f08a1a"/><path d="M0.5 6 Q6 1 10 4 Q15 -1 20 4 Q24 1 29.5 6 V0.5 H0.5Z" fill="#f9d64a"/></svg>
<svg class="a" style="left:1394.8px;top:1029px" width="30" height="30" viewBox="0 0 30 30"><path d="M4 8 Q3 4 7 3 L10 9 Q8 11 10 15 Q13 20 17 21 Q19 19 21 20 L26 24 Q25 28 21 27 Q12 25 7 17 Q4 12 4 8Z" fill="#21a04a"/><path d="M17 4 Q26 5 27 14" fill="none" stroke="#34c05a" stroke-width="3"/><path d="M16 9 Q21 10 22 15" fill="none" stroke="#34c05a" stroke-width="3"/></svg>
<svg class="a" style="left:1433.6px;top:1029px" width="30" height="30" viewBox="0 0 30 30"><rect x="0.5" y="0.5" width="29" height="29" rx="7" fill="#5d567d" stroke="#ddd" stroke-width="1"/><g fill="#8a84aa"><rect x="4" y="9" width="4" height="3"/><rect x="9" y="9" width="4" height="3"/><rect x="14" y="9" width="4" height="3"/><rect x="4" y="14" width="4" height="3"/><rect x="9" y="14" width="4" height="3"/><rect x="6" y="19" width="14" height="3"/></g><path d="M19 4 L27 6 L25 26 L17 24Z" fill="none" stroke="#cfcbe6" stroke-width="1.3"/></svg>
<svg class="a" style="left:1469.5px;top:1026px" width="36" height="36" viewBox="0 0 36 36"><rect x="0" y="0" width="36" height="36" fill="#1d3ca8"/><text x="3" y="11" font-family="Liberation Sans" font-size="9.5" font-weight="bold" fill="#fff">The</text><text x="2" y="21" font-family="Liberation Sans" font-size="8.5" font-weight="bold" fill="#fff">Weather</text><text x="2" y="31" font-family="Liberation Sans" font-size="8.5" font-weight="bold" fill="#fff">Channel</text></svg>
<svg class="a" style="left:1510.3px;top:1027px" width="38" height="38" viewBox="0 0 38 38"><rect x="1" y="1" width="30" height="30" rx="6" fill="#a57e1c"/><rect x="4" y="0" width="24" height="29" rx="3" fill="#3a2430"/><g fill="#8c6a7a"><rect x="7" y="5" width="4" height="2"/><rect x="13" y="5" width="4" height="2"/><rect x="19" y="5" width="4" height="2"/><rect x="7" y="11" width="4" height="2"/><rect x="13" y="11" width="4" height="2"/><rect x="19" y="11" width="4" height="2"/><rect x="7" y="17" width="4" height="2"/><rect x="13" y="17" width="4" height="2"/></g></svg>
<svg class="a" style="left:1550.2px;top:1029px" width="30" height="30" viewBox="0 0 30 30"><rect x="0.5" y="0.5" width="29" height="29" rx="7" fill="#ffffff" /><path d="M7 13 Q8 6 16 6 H22" fill="none" stroke="#2e7fe0" stroke-width="2.6"/><path d="M20 3 L24 6 L20 9" fill="#2e7fe0"/><path d="M23 17 Q22 24 14 24 H8" fill="none" stroke="#e6402f" stroke-width="2.6"/><path d="M10 21 L6 24 L10 27" fill="#e6402f"/><g fill="#2e7fe0"><circle cx="11" cy="15" r="1.3"/><circle cx="15" cy="15" r="1.3"/><circle cx="19" cy="15" r="1.3"/></g></svg>
<svg class="a" style="left:1589.0px;top:1029px" width="30" height="30" viewBox="0 0 30 30"><defs><linearGradient id="bt" x1="0" y1="0" x2="0" y2="1"><stop offset="0" stop-color="#38a8ff"/><stop offset="1" stop-color="#1476e8"/></linearGradient></defs><rect x="0.5" y="0.5" width="29" height="29" rx="7" fill="url(#bt)" /><rect x="7" y="7" width="16" height="16" rx="4" fill="#fff"/><rect x="14" y="7" width="2" height="16" fill="#2a8cf5"/><rect x="16" y="14" width="7" height="2" fill="#2a8cf5"/></svg>
<svg class="a" style="left:1645.0px;top:1029px" width="30" height="30" viewBox="0 0 30 30"><rect x="0.5" y="0.5" width="29" height="29" rx="7" fill="#1b1d1d" stroke="#888" stroke-width="1"/><rect x="3" y="3" width="24" height="24" fill="#0d2a1e"/><path d="M3 17 H9 L11 10 L14 22 L16 15 L19 17 H27" fill="none" stroke="#3fd17a" stroke-width="1.2"/></svg>
<svg class="a" style="left:1683.8px;top:1029px" width="30" height="30" viewBox="0 0 30 30"><rect x="0.5" y="0.5" width="29" height="29" rx="7" fill="#e6e6e6" /><circle cx="6" cy="6" r="1.5" fill="#ff5f57"/><circle cx="10" cy="6" r="1.5" fill="#febc2e"/><circle cx="14" cy="6" r="1.5" fill="#28c840"/><rect x="5" y="10" width="20" height="15" rx="2" fill="#3a3a3a"/><path d="M11 13 H18 L12 17 H18 L12 21 H17" fill="none" stroke="#eee" stroke-width="1.4"/></svg>
<svg class="a" style="left:1722.7px;top:1028px" width="30" height="32" viewBox="0 0 30 32"><circle cx="15" cy="16" r="14" fill="#fff"/><rect x="8" y="10" width="6.5" height="6.5" fill="#f25022"/><rect x="15.5" y="10" width="6.5" height="6.5" fill="#7fba00"/><rect x="8" y="17.5" width="6.5" height="6.5" fill="#00a4ef"/><rect x="15.5" y="17.5" width="6.5" height="6.5" fill="#ffb900"/><path d="M11 0 H17 V5 H20 L14 10 L8 5 H11Z" fill="#3fae49"/></svg>
<svg class="a" style="left:1761.5px;top:1029px" width="30" height="30" viewBox="0 0 30 30"><defs><linearGradient id="gc" x1="0" y1="0" x2="0" y2="1"><stop offset="0" stop-color="#62c654"/><stop offset="1" stop-color="#2f9d3a"/></linearGradient></defs><rect x="0.5" y="0.5" width="29" height="29" rx="7" fill="url(#gc)" /><path d="M22 7 H10 L7 10 V20 L10 23 H22" fill="none" stroke="#fff" stroke-width="4"/></svg>
<svg class="a" style="left:1800.4px;top:1029px" width="30" height="30" viewBox="0 0 30 30"><defs><linearGradient id="mu" x1="0" y1="0" x2="0" y2="1"><stop offset="0" stop-color="#fb5c74"/><stop offset="1" stop-color="#fa233b"/></linearGradient></defs><rect x="0.5" y="0.5" width="29" height="29" rx="7" fill="url(#mu)" /><path d="M12 9 L22 6.5 V19" fill="none" stroke="#fff" stroke-width="2.2"/><path d="M12 9 V22" stroke="#fff" stroke-width="2.2"/><circle cx="9.5" cy="22" r="3" fill="#fff"/><circle cx="19.5" cy="19.5" r="3" fill="#fff"/></svg><svg class="a" style="left:1857px;top:1027px" width="28" height="34" viewBox="0 0 28 34"><path d="M2 6 L5 31 Q6 33 14 33 Q22 33 23 31 L26 6Z" fill="#e5e5e5" opacity="0.9"/><ellipse cx="14" cy="6" rx="12" ry="3.5" fill="#cfcfcf"/><path d="M7 6 L10 3 L13 6 M15 5 L19 2 L21 6" stroke="#555" stroke-width="2" fill="none"/><circle cx="10" cy="5" r="1.2" fill="#3fd17a"/></svg><div class="a" style="left:365.8px;top:1025px;width:12px;height:12px;border-radius:6px;background:#f0443a;color:#fff;font-size:9px;text-align:center;line-height:12px">2</div><div class="a" style="left:1741.7px;top:1025px;width:13px;height:13px;border-radius:7px;background:#f0443a;color:#fff;font-size:9px;text-align:center;line-height:13px">8</div><div class="a" style="left:1631px;top:1027px;width:1.5px;height:34px;background:#4a4a4a"></div><div class="a" style="left:1842px;top:1027px;width:1.5px;height:34px;background:#4a4a4a"></div><div class="dot" style="left:46.0px"></div><div class="dot" style="left:162.6px"></div><div class="dot" style="left:201.4px"></div><div class="dot" style="left:356.8px"></div><div class="dot" style="left:395.7px"></div><div class="dot" style="left:434.5px"></div><div class="dot" style="left:589.9px"></div><div class="dot" style="left:628.8px"></div><div class="dot" style="left:706.5px"></div><div class="dot" style="left:861.9px"></div><div class="dot" style="left:900.7px"></div><div class="dot" style="left:1172.7px"></div><div class="dot" style="left:1405.8px"></div><div class="dot" style="left:1444.6px"></div><div class="dot" style="left:1561.2px"></div><div class="dot" style="left:1656.0px"></div><div class="dot" style="left:1694.8px"></div><div class="dot" style="left:1733.7px"></div><div class="dot" style="left:1772.5px"></div><div class="dot" style="left:1811.4px"></div>
</body></html>
